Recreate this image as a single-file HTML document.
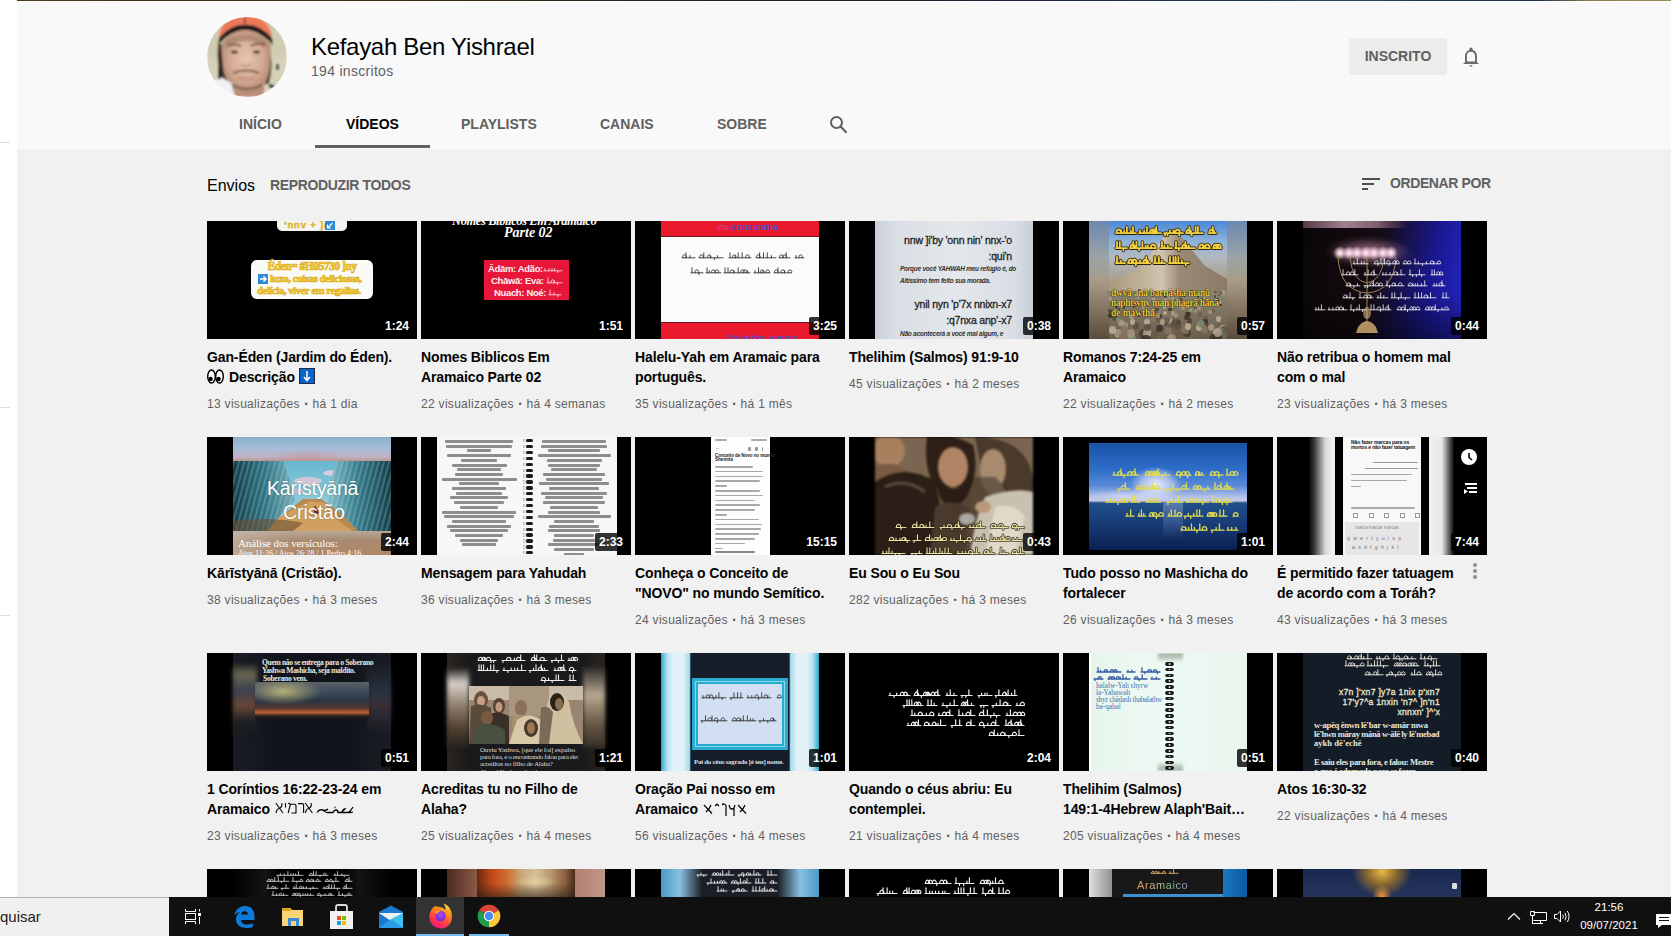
<!DOCTYPE html>
<html><head><meta charset="utf-8">
<style>
*{margin:0;padding:0;box-sizing:border-box}
html,body{width:1671px;height:936px;overflow:hidden;background:#fff;font-family:"Liberation Sans",sans-serif}
#app{position:absolute;left:17px;top:0;width:1654px;height:897px;background:#f1f1f1;overflow:hidden}
#hdr{position:absolute;left:0;top:0;width:1654px;height:149px;background:#f9f9f9}
#banner{position:absolute;left:0;top:0;width:1654px;height:1px;background:linear-gradient(90deg,#4a3a1a,#3a2a14 25%,#22201e 45%,#1a2438 60%,#2a4060 80%,#203048 92%,#8a7a50 95%,#9a8a60)}
.abs{position:absolute}
.th{position:absolute;width:210px;height:118px;background:#000;overflow:hidden}
.dur{position:absolute;right:4px;bottom:4px;height:18px;padding:0 4px;border-radius:2px;background:rgba(0,0,0,.8);color:#fff;font-size:12px;font-weight:bold;line-height:18px}
.ti{position:absolute;width:210px;font-size:14px;line-height:20px;font-weight:bold;color:#030303;white-space:nowrap;letter-spacing:-0.12px}
.me{position:absolute;font-size:12px;line-height:18px;color:#606060;white-space:nowrap;letter-spacing:0.3px}
.dot{font-size:9px;margin:0 1px;position:relative;top:-1px}
.tab{position:absolute;top:116px;font-size:14px;font-weight:bold;color:#606060;line-height:16px}
#taskbar{position:absolute;left:0;top:897px;width:1671px;height:39px;background:#101010}
</style></head><body>
<div class="abs" style="left:0;top:142px;width:10px;height:1px;background:#ddd"></div>
<div class="abs" style="left:0;top:407px;width:10px;height:1px;background:#ddd"></div>
<div class="abs" style="left:0;top:615px;width:10px;height:1px;background:#ddd"></div>
<div id="app">
<div id="hdr"><div id="banner"></div><div style="position:absolute;left:0;top:1px;width:1654px;height:1px;background:#fff"></div></div>
</div>
<svg class="abs" style="left:207px;top:17px" width="80" height="80" viewBox="0 0 80 80">
<defs><clipPath id="avc"><circle cx="40" cy="40" r="40"/></clipPath>
<filter id="bl" x="-10%" y="-10%" width="120%" height="120%"><feGaussianBlur stdDeviation="0.8"/></filter>
<radialGradient id="face" cx="50%" cy="45%" r="60%"><stop offset="0" stop-color="#e6c6ae"/><stop offset=".55" stop-color="#d4aa92"/><stop offset="1" stop-color="#a88068"/></radialGradient></defs>
<g clip-path="url(#avc)"><g filter="url(#bl)">
<rect width="80" height="80" fill="#d6d2b8"/>
<path d="M0 0 H80 V40 H0 Z" fill="#d0ccb0"/>
<path d="M12 21 Q13 -1 38 -1 Q63 -1 65 21 Q52 7 38 7.7 Q24 7 12 21 Z" fill="#ec7856"/>
<path d="M12 21 Q24 7 38 7.7 Q52 7 65 21 L66 28 Q52 13 38 13 Q24 13 11 28 Z" fill="#1c1818"/>
<path d="M37.7 0 V7" stroke="#2a3050" stroke-width="1.2"/>
<path d="M11 27 Q9 48 15 64 L21 66 L17 27 Z" fill="#3a2c22"/>
<path d="M60 24 Q68 46 62 66 L58 68 L61 28 Z" fill="#3a2c22"/>
<path d="M24 66 L56 66 L60 80 L20 80 Z" fill="#bc907a"/>
<path d="M14 28 Q24 13 38 13 Q52 13 64 28 L63 50 Q61 74 40 77 Q19 74 16 50 Z" fill="url(#face)"/><path d="M18 25 Q38 10 60 25 L58 30 Q38 18 20 30 Z" fill="#a07a62" opacity=".6"/>
<path d="M21 29 Q28 26 34 29" stroke="#5a4034" stroke-width="1.6" fill="none"/>
<path d="M44 29 Q51 25 58 28" stroke="#5a4034" stroke-width="1.6" fill="none"/>
<ellipse cx="27.5" cy="35" rx="3.6" ry="1.6" fill="#4a2e24"/><ellipse cx="49.5" cy="35" rx="3.6" ry="1.6" fill="#4a2e24"/>
<path d="M34 47 Q39 51 44 47" stroke="#a87a64" stroke-width="1.4" fill="none" opacity=".7"/>
<path d="M26 56 Q40 51 52 56" stroke="#7a5a48" stroke-width="2" fill="none"/>
<path d="M31 60.5 Q40 63 48 60.5" stroke="#c89080" stroke-width="2" fill="none"/>
<path d="M26 68 Q40 76 55 68" stroke="#6a5044" stroke-width="2.4" fill="none" opacity=".7"/>
<path d="M0 68 L14 60 L24 66 L28 80 L0 80 Z" fill="#eef0f4"/>
<path d="M58 70 L80 66 L80 80 L56 80 Z" fill="#ddd6c4"/>
<path d="M62 68 L74 74" stroke="#222" stroke-width="3.2"/>
<rect x="69" y="47" width="3" height="6" fill="#333"/>
<rect x="11" y="50" width="3" height="12" fill="#222"/>
</g></g></svg>
<div class="abs" style="left:311px;top:33px;font-size:24px;line-height:28px;color:#030303;letter-spacing:-0.3px">Kefayah Ben Yishrael</div>
<div class="abs" style="left:311px;top:62px;font-size:14px;line-height:18px;color:#606060;letter-spacing:0.3px">194 inscritos</div>
<div class="abs" style="left:1349px;top:38px;width:98px;height:37px;background:#ececec;border-radius:2px;color:#606060;font-size:14px;font-weight:bold;line-height:37px;text-align:center">INSCRITO</div>
<svg class="abs" style="left:1455px;top:40px" width="32" height="32" viewBox="0 0 32 32" fill="#6a6a6a">
<path d="M11 22.5 V15.8 a5 5 0 0 1 10 0 V22.5" stroke="#6a6a6a" stroke-width="1.9" fill="none"/>
<path d="M8 24 L11 21.5 H21 L24 24 Z"/><circle cx="16" cy="9.2" r="1.6"/><path d="M14 25.2 H18 L16 27 Z"/></svg>
<svg class="abs" style="left:820px;top:105px" width="40" height="40" viewBox="0 0 40 40">
<circle cx="16.5" cy="17.5" r="5.5" stroke="#606060" stroke-width="2" fill="none"/>
<path d="M20.5 21.5 L26 27" stroke="#606060" stroke-width="2.2" stroke-linecap="round"/></svg>
<div class="abs" style="left:1362px;top:178px;width:18px;height:2px;background:#505050"></div>
<div class="abs" style="left:1362px;top:183px;width:12px;height:2px;background:#505050"></div>
<div class="abs" style="left:1362px;top:188px;width:6px;height:2px;background:#505050"></div>
<div class="tab" style="left:239px">INÍCIO</div>
<div class="tab" style="left:346px;color:#030303">VÍDEOS</div>
<div class="abs" style="left:315px;top:145px;width:115px;height:3px;background:#606060"></div>
<div class="tab" style="left:461px">PLAYLISTS</div>
<div class="tab" style="left:600px">CANAIS</div>
<div class="tab" style="left:717px">SOBRE</div>
<div class="abs" style="left:207px;top:177px;font-size:16px;line-height:18px;color:#030303">Envios</div>
<div class="abs" style="left:270px;top:177px;font-size:14px;font-weight:bold;line-height:16px;color:#606060;letter-spacing:-0.35px">REPRODUZIR TODOS</div>
<div class="abs" style="left:1390px;top:175px;font-size:14px;font-weight:bold;line-height:16px;color:#606060;letter-spacing:-0.4px">ORDENAR POR</div>
<div class="th" style="left:207px;top:221px"><div style="position:absolute;left:70px;top:-2px;width:70px;height:12px;background:#f4f4f0;border-radius:0 0 5px 5px"></div><div style="position:absolute;left:77px;top:-1px;color:#f0c830;font-size:9.5px;line-height:1;white-space:nowrap;font-family:'Liberation Sans';font-weight:bold;letter-spacing:0.8px;-webkit-text-stroke:0.4px #d0a020">ʼnnv + ]a</div><div style="position:absolute;left:118px;top:0px;width:10px;height:9px;background:#2a8ad8;"></div><svg style="position:absolute;left:119px;top:1px" width="8" height="7"><path d="M6.5 1 L1.5 6 M1.5 2.5 V6 H5" stroke="#fff" stroke-width="1.2" fill="none"/></svg><div style="position:absolute;left:44px;top:39px;width:122px;height:39px;background:#fafaf6;border-radius:6px"></div><div style="position:absolute;left:44px;top:40px;color:#f5cc28;font-size:11.5px;line-height:1;white-space:nowrap;font-family:'Liberation Serif';font-weight:bold;letter-spacing:-0.5px;width:122px;text-align:center;-webkit-text-stroke:0.7px #e0b020">Éden= #H05730 ]ny</div><div style="position:absolute;left:51px;top:53px;width:10px;height:10px;background:#2a8ad8;"></div><svg style="position:absolute;left:51px;top:53px" width="10" height="10"><path d="M2 5 H8 M5.5 2.5 L8 5 L5.5 7.5" stroke="#fff" stroke-width="1.6" fill="none"/></svg><div style="position:absolute;left:63px;top:52px;color:#f5cc28;font-size:11px;line-height:1;white-space:nowrap;font-family:'Liberation Serif';font-weight:bold;letter-spacing:-0.5px;-webkit-text-stroke:0.7px #e0b020">luxo, coisas deliciosas,</div><div style="position:absolute;left:50px;top:64px;color:#f5cc28;font-size:11px;line-height:1;white-space:nowrap;font-family:'Liberation Serif';font-weight:bold;letter-spacing:-0.55px;-webkit-text-stroke:0.7px #e0b020">delícia, viver em regalias.</div><span class="dur">1:24</span></div>
<div class="ti" style="left:207px;top:347px">Gan-Éden (Jardim do Éden).<br><svg width="17" height="15" viewBox="0 0 17 15" style="vertical-align:-2px;margin-right:5px"><ellipse cx="4.5" cy="7.5" rx="3.8" ry="6.5" fill="#fff" stroke="#000" stroke-width="1.4"/><ellipse cx="12.5" cy="7.5" rx="3.8" ry="6.5" fill="#fff" stroke="#000" stroke-width="1.4"/><circle cx="3.6" cy="10" r="2.2" fill="#000"/><circle cx="11.6" cy="10" r="2.2" fill="#000"/></svg>Descrição<svg width="16" height="16" viewBox="0 0 16 16" style="vertical-align:-2px;margin-left:4px"><rect x="0.5" y="0.5" width="15" height="15" fill="#0a63c9" stroke="#1a2a4a" stroke-width="1"/><path d="M8 3 V12 M5 9 L8 12.5 L11 9" stroke="#fff" stroke-width="1.5" fill="none"/></svg></div>
<div class="me" style="left:207px;top:395px">13 visualizações <span class="dot">•</span> há 1 dia</div><div class="th" style="left:421px;top:221px"><div style="position:absolute;left:31px;top:-6px;color:#fff;font-size:12.5px;line-height:1;white-space:nowrap;font-family:'Liberation Serif';font-style:italic;font-weight:bold;letter-spacing:-0.4px">Nomes Biblicos Em Aramaico</div><div style="position:absolute;left:83px;top:5px;color:#fff;font-size:14px;line-height:1;white-space:nowrap;font-family:'Liberation Serif';font-style:italic;font-weight:bold">Parte 02</div><div style="position:absolute;left:63px;top:39px;width:85px;height:40px;background:#e8173a;"></div><div style="position:absolute;left:67px;top:43px;color:#fff0f4;font-size:9.5px;line-height:1;white-space:nowrap;font-family:'Liberation Sans';font-weight:bold;letter-spacing:-0.35px">Ādām: Adão:</div><svg style="position:absolute;left:123px;top:44px;overflow:visible" width="18" height="8"><path d="M0.0 5.8 H18.0 M1.0 5.8 V3.6 M4.9 5.8 V3.6 M8.0 5.8 V3.6 M10.6 5.8 V3.6 M13.7 5.8 V7.6" stroke="#fce8ee" stroke-width="0.8" fill="none" stroke-linecap="round"/></svg><div style="position:absolute;left:70px;top:55px;color:#fff0f4;font-size:9.5px;line-height:1;white-space:nowrap;font-family:'Liberation Sans';font-weight:bold;letter-spacing:-0.35px">Chāwā: Eva:</div><svg style="position:absolute;left:126px;top:56px;overflow:visible" width="15" height="8"><path d="M0.0 5.8 H15.0 M1.0 5.8 V0.8 M4.3 5.8 a1.8 1.8 0 1 1 2.8 0 M7.2 5.8 V3.6 M10.4 5.8 V7.6" stroke="#fce8ee" stroke-width="0.8" fill="none" stroke-linecap="round"/></svg><div style="position:absolute;left:73px;top:67px;color:#fff0f4;font-size:9.5px;line-height:1;white-space:nowrap;font-family:'Liberation Sans';font-weight:bold;letter-spacing:-0.35px">Nuach: Noé:</div><svg style="position:absolute;left:128px;top:68px;overflow:visible" width="12" height="8"><path d="M0.0 5.8 H12.0 M1.0 5.8 V0.8 M5.0 5.8 V3.6 M9.0 5.8 V7.6" stroke="#fce8ee" stroke-width="0.8" fill="none" stroke-linecap="round"/></svg><span class="dur">1:51</span></div>
<div class="ti" style="left:421px;top:347px">Nomes Biblicos Em<br>Aramaico Parte 02</div>
<div class="me" style="left:421px;top:395px">22 visualizações <span class="dot">•</span> há 4 semanas</div><div class="th" style="left:635px;top:221px"><div style="position:absolute;left:26px;top:0px;width:158px;height:118px;background:#ea1a2c;"></div><div style="position:absolute;left:26px;top:15px;width:158px;height:87px;background:#fbfbfb;border-top:1px solid #7a1222;border-bottom:1px solid #7a1222"></div><svg style="position:absolute;left:47px;top:31px;overflow:visible" width="122" height="8"><path d="M0.0 5.8 H13.0 M1.0 5.8 a1.8 1.8 0 1 1 2.8 0 M4.0 5.8 V0.8 M7.9 5.8 V3.6 M17.0 5.8 H41.0 M18.0 5.8 a1.8 1.8 0 1 1 2.8 0 M21.8 5.8 V0.8 M25.8 5.8 a1.8 1.8 0 1 1 2.8 0 M28.3 5.8 V3.6 M32.4 5.8 V7.6 M35.4 5.8 V3.6 M47.0 5.8 H69.0 M48.0 5.8 V0.8 M50.9 5.8 a1.8 1.8 0 1 1 2.8 0 M53.3 5.8 V3.6 M56.2 5.8 V0.8 M60.1 5.8 V0.8 M64.1 5.8 a1.8 1.8 0 1 1 2.8 0 M74.0 5.8 H94.0 M75.0 5.8 a1.8 1.8 0 1 1 2.8 0 M77.6 5.8 V0.8 M81.5 5.8 V0.8 M85.3 5.8 V0.8 M89.4 5.8 V3.6 M97.0 5.8 H108.0 M98.0 5.8 a1.8 1.8 0 1 1 2.8 0 M101.3 5.8 a1.8 1.8 0 1 1 2.8 0 M104.2 5.8 V0.8 M113.0 5.8 H122.0 M114.0 5.8 V3.6 M117.2 5.8 a1.8 1.8 0 1 1 2.8 0" stroke="#333" stroke-width="0.9" fill="none" stroke-linecap="round"/></svg><svg style="position:absolute;left:56px;top:46px;overflow:visible" width="105" height="8"><path d="M0.0 5.8 H12.0 M1.0 5.8 V0.8 M4.4 5.8 a1.8 1.8 0 1 1 2.8 0 M8.0 5.8 V7.6 M15.0 5.8 H30.0 M16.0 5.8 V0.8 M18.3 5.8 V3.6 M20.9 5.8 a1.8 1.8 0 1 1 2.8 0 M24.5 5.8 a1.8 1.8 0 1 1 2.8 0 M33.0 5.8 H59.0 M34.0 5.8 V0.8 M37.0 5.8 V0.8 M39.5 5.8 a1.8 1.8 0 1 1 2.8 0 M43.1 5.8 V3.6 M47.2 5.8 V0.8 M50.1 5.8 a1.8 1.8 0 1 1 2.8 0 M52.6 5.8 a1.8 1.8 0 1 1 2.8 0 M56.6 5.8 V3.6 M63.0 5.8 H79.0 M64.0 5.8 V3.6 M67.5 5.8 V0.8 M69.8 5.8 a1.8 1.8 0 1 1 2.8 0 M72.1 5.8 V3.6 M75.3 5.8 a1.8 1.8 0 1 1 2.8 0 M83.0 5.8 H100.0 M84.0 5.8 a1.8 1.8 0 1 1 2.8 0 M87.0 5.8 V0.8 M90.3 5.8 a1.8 1.8 0 1 1 2.8 0 M93.6 5.8 V3.6 M97.6 5.8 a1.8 1.8 0 1 1 2.8 0" stroke="#333" stroke-width="0.9" fill="none" stroke-linecap="round"/></svg><div style="position:absolute;left:83px;top:1px;color:#2a5ae8;font-size:9.5px;line-height:1;white-space:nowrap;font-family:'Liberation Sans';letter-spacing:-0.4px"><span style="color:#d04090">rta</span> e nos anima.</div><div style="position:absolute;left:92px;top:112px;color:#2a5ae8;font-size:9.5px;line-height:1;white-space:nowrap;font-family:'Liberation Sans'">Salvador, vamos</div><span class="dur">3:25</span></div>
<div class="ti" style="left:635px;top:347px">Halelu-Yah em Aramaic para<br>português.</div>
<div class="me" style="left:635px;top:395px">35 visualizações <span class="dot">•</span> há 1 mês</div><div class="th" style="left:849px;top:221px"><div style="position:absolute;left:26px;top:0px;width:158px;height:118px;background:linear-gradient(90deg,#c8ced6,#d8dee4 12%,#e4e8ec 50%,#d8dee4 88%,#c8ced6);"></div><div style="position:absolute;left:40px;top:14px;color:#222;font-size:10.5px;line-height:1;white-space:nowrap;font-family:'Liberation Sans';letter-spacing:-0.2px;-webkit-text-stroke:0.3px currentColor;width:123px;text-align:right">nnw ]i'by 'onn nin' nnx-'o</div><div style="position:absolute;left:40px;top:30px;color:#222;font-size:10.5px;line-height:1;white-space:nowrap;font-family:'Liberation Sans';letter-spacing:-0.2px;-webkit-text-stroke:0.3px currentColor;width:123px;text-align:right">:qui'n</div><div style="position:absolute;left:51px;top:45px;color:#333;font-size:6.5px;line-height:1;white-space:nowrap;font-family:'Liberation Sans';font-weight:bold;font-style:italic;letter-spacing:-0.25px">Porque você YAHWAH meu refúgio é, do</div><div style="position:absolute;left:51px;top:57px;color:#333;font-size:6.5px;line-height:1;white-space:nowrap;font-family:'Liberation Sans';font-weight:bold;font-style:italic;letter-spacing:-0.25px">Altíssimo tem feito sua morada.</div><div style="position:absolute;left:40px;top:78px;color:#222;font-size:10.5px;line-height:1;white-space:nowrap;font-family:'Liberation Sans';letter-spacing:-0.2px;-webkit-text-stroke:0.3px currentColor;width:123px;text-align:right">ynil nyn 'p'7x nnixn-x7</div><div style="position:absolute;left:40px;top:94px;color:#222;font-size:10.5px;line-height:1;white-space:nowrap;font-family:'Liberation Sans';letter-spacing:-0.2px;-webkit-text-stroke:0.3px currentColor;width:123px;text-align:right">:q7nxa anp'-x7</div><div style="position:absolute;left:51px;top:110px;color:#333;font-size:6.5px;line-height:1;white-space:nowrap;font-family:'Liberation Sans';font-weight:bold;font-style:italic;letter-spacing:-0.25px">Não acontecerá a você mal algum, e</div><span class="dur">0:38</span></div>
<div class="ti" style="left:849px;top:347px">Thelihim (Salmos) 91:9-10</div>
<div class="me" style="left:849px;top:375px">45 visualizações <span class="dot">•</span> há 2 meses</div><div class="th" style="left:1063px;top:221px"><div style="position:absolute;left:26px;top:0px;width:158px;height:118px;background:linear-gradient(180deg,#6a88b0 0%,#9aa4a8 30%,#a89c88 50%,#8a7c68 70%,#5a4c3c 100%);"></div><div style="position:absolute;left:46px;top:0px;width:118px;height:118px;background:linear-gradient(180deg,#4a88d8 0%,#90b4d8 18%,#b0b8c0 30%,#a8a090 50%,#8a7a64 66%,#7a6a58 80%,#5a4a3a 100%);"></div><svg style="position:absolute;left:46px;top:0" width="118" height="118"><defs><linearGradient id="mt4" x1="0" y1="0" x2="1" y2="0"><stop offset="0" stop-color="#a8987c"/><stop offset=".45" stop-color="#d0c4ae"/><stop offset=".6" stop-color="#9a8a74"/><stop offset="1" stop-color="#8a7a66"/></linearGradient></defs><path d="M0 62 L30 48 L58 12 L72 16 L96 45 L118 58 L118 80 L0 80 Z" fill="url(#mt4)"/><path d="M0 72 H118 V118 H0 Z" fill="#7a6a56"/></svg><div style="position:absolute;left:46px;top:70px;width:118px;height:48px;background:linear-gradient(180deg,#8a8470,#6a5e4c);"></div><div style="position:absolute;left:80.5px;top:105.6px;width:7.4px;height:8.2px;background:#b0a088;border-radius:50%;opacity:.85"></div><div style="position:absolute;left:152.9px;top:77.1px;width:2.7px;height:3.0px;background:#3a3028;border-radius:50%;opacity:.85"></div><div style="position:absolute;left:107.8px;top:90.4px;width:4.1px;height:4.5px;background:#b0a088;border-radius:50%;opacity:.85"></div><div style="position:absolute;left:116.4px;top:74.8px;width:2.6px;height:2.9px;background:#6a5a48;border-radius:50%;opacity:.85"></div><div style="position:absolute;left:75.0px;top:68.1px;width:2.5px;height:2.8px;background:#5a4c3e;border-radius:50%;opacity:.85"></div><div style="position:absolute;left:138.0px;top:76.1px;width:2.6px;height:2.9px;background:#6a5a48;border-radius:50%;opacity:.85"></div><div style="position:absolute;left:87.8px;top:114.9px;width:10.4px;height:11.4px;background:#8a7660;border-radius:50%;opacity:.85"></div><div style="position:absolute;left:52.3px;top:83.1px;width:3.2px;height:3.5px;background:#3a3028;border-radius:50%;opacity:.85"></div><div style="position:absolute;left:66.2px;top:93.1px;width:4.6px;height:5.0px;background:#b0a088;border-radius:50%;opacity:.85"></div><div style="position:absolute;left:141.8px;top:71.4px;width:2.5px;height:2.8px;background:#6a5a48;border-radius:50%;opacity:.85"></div><div style="position:absolute;left:112.2px;top:110.4px;width:8.9px;height:9.7px;background:#6a5a48;border-radius:50%;opacity:.85"></div><div style="position:absolute;left:141.1px;top:71.6px;width:2.5px;height:2.8px;background:#b0a088;border-radius:50%;opacity:.85"></div><div style="position:absolute;left:142.3px;top:102.9px;width:6.7px;height:7.4px;background:#4a3e32;border-radius:50%;opacity:.85"></div><div style="position:absolute;left:139.6px;top:95.1px;width:5.0px;height:5.5px;background:#6a5a48;border-radius:50%;opacity:.85"></div><div style="position:absolute;left:74.1px;top:113.7px;width:10.0px;height:11.0px;background:#6a5a48;border-radius:50%;opacity:.85"></div><div style="position:absolute;left:83.5px;top:113.8px;width:10.0px;height:11.0px;background:#6a5a48;border-radius:50%;opacity:.85"></div><div style="position:absolute;left:141.5px;top:70.7px;width:2.5px;height:2.8px;background:#c0b098;border-radius:50%;opacity:.85"></div><div style="position:absolute;left:153.6px;top:103.3px;width:6.8px;height:7.5px;background:#6a5a48;border-radius:50%;opacity:.85"></div><div style="position:absolute;left:109.6px;top:79.6px;width:2.9px;height:3.1px;background:#c0b098;border-radius:50%;opacity:.85"></div><div style="position:absolute;left:132.7px;top:102.7px;width:6.7px;height:7.3px;background:#c0b098;border-radius:50%;opacity:.85"></div><div style="position:absolute;left:158.2px;top:68.6px;width:2.5px;height:2.8px;background:#a89880;border-radius:50%;opacity:.85"></div><div style="position:absolute;left:46.7px;top:91.3px;width:4.3px;height:4.7px;background:#8a7660;border-radius:50%;opacity:.85"></div><div style="position:absolute;left:93.1px;top:103.7px;width:6.9px;height:7.6px;background:#3a3028;border-radius:50%;opacity:.85"></div><div style="position:absolute;left:148.8px;top:114.3px;width:10.2px;height:11.2px;background:#5a4c3e;border-radius:50%;opacity:.85"></div><div style="position:absolute;left:97.6px;top:70.6px;width:2.5px;height:2.8px;background:#4a3e32;border-radius:50%;opacity:.85"></div><div style="position:absolute;left:104.7px;top:74.9px;width:2.6px;height:2.9px;background:#a89880;border-radius:50%;opacity:.85"></div><div style="position:absolute;left:150.0px;top:107.6px;width:8.0px;height:8.8px;background:#c0b098;border-radius:50%;opacity:.85"></div><div style="position:absolute;left:49.3px;top:95.1px;width:5.0px;height:5.4px;background:#5a4c3e;border-radius:50%;opacity:.85"></div><div style="position:absolute;left:139.8px;top:74.9px;width:2.6px;height:2.9px;background:#a89880;border-radius:50%;opacity:.85"></div><div style="position:absolute;left:70.3px;top:100.9px;width:6.2px;height:6.9px;background:#5a4c3e;border-radius:50%;opacity:.85"></div><div style="position:absolute;left:88.1px;top:73.3px;width:2.5px;height:2.8px;background:#5a4c3e;border-radius:50%;opacity:.85"></div><div style="position:absolute;left:142.9px;top:72.8px;width:2.5px;height:2.8px;background:#b0a088;border-radius:50%;opacity:.85"></div><div style="position:absolute;left:133.1px;top:80.3px;width:2.9px;height:3.2px;background:#4a3e32;border-radius:50%;opacity:.85"></div><div style="position:absolute;left:59.6px;top:75.6px;width:2.6px;height:2.9px;background:#a89880;border-radius:50%;opacity:.85"></div><div style="position:absolute;left:69.5px;top:113.0px;width:9.7px;height:10.7px;background:#6a5a48;border-radius:50%;opacity:.85"></div><div style="position:absolute;left:156.1px;top:104.2px;width:7.1px;height:7.8px;background:#c0b098;border-radius:50%;opacity:.85"></div><div style="position:absolute;left:73.6px;top:91.0px;width:4.2px;height:4.6px;background:#4a3e32;border-radius:50%;opacity:.85"></div><div style="position:absolute;left:91.0px;top:90.2px;width:4.1px;height:4.5px;background:#6a5a48;border-radius:50%;opacity:.85"></div><div style="position:absolute;left:95.5px;top:81.0px;width:3.0px;height:3.3px;background:#b0a088;border-radius:50%;opacity:.85"></div><div style="position:absolute;left:99.4px;top:68.9px;width:2.5px;height:2.8px;background:#a89880;border-radius:50%;opacity:.85"></div><div style="position:absolute;left:58.7px;top:68.9px;width:2.5px;height:2.8px;background:#4a3e32;border-radius:50%;opacity:.85"></div><div style="position:absolute;left:54.9px;top:99.0px;width:5.8px;height:6.4px;background:#b0a088;border-radius:50%;opacity:.85"></div><div style="position:absolute;left:133.9px;top:99.9px;width:6.0px;height:6.6px;background:#7a8a78;border-radius:50%;opacity:.85"></div><div style="position:absolute;left:120.4px;top:73.1px;width:2.5px;height:2.8px;background:#3a3028;border-radius:50%;opacity:.85"></div><div style="position:absolute;left:99.6px;top:89.6px;width:4.0px;height:4.4px;background:#c0b098;border-radius:50%;opacity:.85"></div><div style="position:absolute;left:139.7px;top:77.1px;width:2.7px;height:3.0px;background:#c0b098;border-radius:50%;opacity:.85"></div><div style="position:absolute;left:75.5px;top:107.7px;width:8.1px;height:8.9px;background:#4a3e32;border-radius:50%;opacity:.85"></div><div style="position:absolute;left:80.2px;top:108.3px;width:8.2px;height:9.1px;background:#b0a088;border-radius:50%;opacity:.85"></div><div style="position:absolute;left:156.5px;top:104.5px;width:7.1px;height:7.9px;background:#5a4c3e;border-radius:50%;opacity:.85"></div><div style="position:absolute;left:132.6px;top:114.3px;width:10.2px;height:11.2px;background:#6a5a48;border-radius:50%;opacity:.85"></div><div style="position:absolute;left:105.1px;top:86.5px;width:3.6px;height:3.9px;background:#3a3028;border-radius:50%;opacity:.85"></div><div style="position:absolute;left:130.1px;top:85.8px;width:3.5px;height:3.8px;background:#6a5a48;border-radius:50%;opacity:.85"></div><div style="position:absolute;left:119.7px;top:107.6px;width:8.0px;height:8.8px;background:#4a3e32;border-radius:50%;opacity:.85"></div><div style="position:absolute;left:54.2px;top:80.9px;width:3.0px;height:3.3px;background:#7a8a78;border-radius:50%;opacity:.85"></div><div style="position:absolute;left:134.2px;top:84.9px;width:3.4px;height:3.7px;background:#a89880;border-radius:50%;opacity:.85"></div><div style="position:absolute;left:139.3px;top:78.0px;width:2.7px;height:3.0px;background:#6a5a48;border-radius:50%;opacity:.85"></div><div style="position:absolute;left:110.4px;top:96.4px;width:5.2px;height:5.8px;background:#6a5a48;border-radius:50%;opacity:.85"></div><div style="position:absolute;left:127.0px;top:69.0px;width:2.5px;height:2.8px;background:#4a3e32;border-radius:50%;opacity:.85"></div><div style="position:absolute;left:139.1px;top:98.1px;width:5.6px;height:6.1px;background:#3a3028;border-radius:50%;opacity:.85"></div><div style="position:absolute;left:119.0px;top:105.3px;width:7.4px;height:8.1px;background:#8a7660;border-radius:50%;opacity:.85"></div><div style="position:absolute;left:102.8px;top:70.8px;width:2.5px;height:2.8px;background:#c0b098;border-radius:50%;opacity:.85"></div><div style="position:absolute;left:124.9px;top:72.1px;width:2.5px;height:2.8px;background:#4a3e32;border-radius:50%;opacity:.85"></div><div style="position:absolute;left:118.4px;top:84.9px;width:3.4px;height:3.7px;background:#a89880;border-radius:50%;opacity:.85"></div><div style="position:absolute;left:130.3px;top:70.2px;width:2.5px;height:2.8px;background:#7a8a78;border-radius:50%;opacity:.85"></div><div style="position:absolute;left:135.0px;top:91.3px;width:4.3px;height:4.7px;background:#6a5a48;border-radius:50%;opacity:.85"></div><div style="position:absolute;left:51.0px;top:108.0px;width:8.1px;height:8.9px;background:#a89880;border-radius:50%;opacity:.85"></div><div style="position:absolute;left:86.4px;top:73.1px;width:2.5px;height:2.8px;background:#7a8a78;border-radius:50%;opacity:.85"></div><div style="position:absolute;left:134.6px;top:69.8px;width:2.5px;height:2.8px;background:#3a3028;border-radius:50%;opacity:.85"></div><div style="position:absolute;left:152.5px;top:106.4px;width:7.7px;height:8.5px;background:#7a8a78;border-radius:50%;opacity:.85"></div><div style="position:absolute;left:120.9px;top:93.5px;width:4.7px;height:5.1px;background:#4a3e32;border-radius:50%;opacity:.85"></div><div style="position:absolute;left:159.9px;top:70.1px;width:2.5px;height:2.8px;background:#c0b098;border-radius:50%;opacity:.85"></div><div style="position:absolute;left:50.4px;top:92.0px;width:4.4px;height:4.8px;background:#5a4c3e;border-radius:50%;opacity:.85"></div><div style="position:absolute;left:109.0px;top:77.6px;width:2.7px;height:3.0px;background:#8a7660;border-radius:50%;opacity:.85"></div><div style="position:absolute;left:69.1px;top:83.3px;width:3.2px;height:3.5px;background:#5a4c3e;border-radius:50%;opacity:.85"></div><div style="position:absolute;left:152.9px;top:95.1px;width:5.0px;height:5.5px;background:#c0b098;border-radius:50%;opacity:.85"></div><div style="position:absolute;left:144.8px;top:102.7px;width:6.7px;height:7.3px;background:#b0a088;border-radius:50%;opacity:.85"></div><div style="position:absolute;left:53.4px;top:86.9px;width:3.6px;height:4.0px;background:#3a3028;border-radius:50%;opacity:.85"></div><div style="position:absolute;left:81.0px;top:98.2px;width:5.6px;height:6.2px;background:#c0b098;border-radius:50%;opacity:.85"></div><div style="position:absolute;left:101.1px;top:77.0px;width:2.7px;height:3.0px;background:#b0a088;border-radius:50%;opacity:.85"></div><div style="position:absolute;left:136.0px;top:79.9px;width:2.9px;height:3.2px;background:#7a8a78;border-radius:50%;opacity:.85"></div><div style="position:absolute;left:59.2px;top:84.2px;width:3.3px;height:3.6px;background:#3a3028;border-radius:50%;opacity:.85"></div><div style="position:absolute;left:94.7px;top:92.8px;width:4.5px;height:5.0px;background:#3a3028;border-radius:50%;opacity:.85"></div><div style="position:absolute;left:124.1px;top:91.2px;width:4.2px;height:4.7px;background:#4a3e32;border-radius:50%;opacity:.85"></div><div style="position:absolute;left:122.4px;top:90.6px;width:4.2px;height:4.6px;background:#3a3028;border-radius:50%;opacity:.85"></div><div style="position:absolute;left:155.9px;top:81.6px;width:3.0px;height:3.3px;background:#3a3028;border-radius:50%;opacity:.85"></div><div style="position:absolute;left:93.0px;top:95.4px;width:5.0px;height:5.5px;background:#6a5a48;border-radius:50%;opacity:.85"></div><div style="position:absolute;left:123.6px;top:97.0px;width:5.3px;height:5.9px;background:#4a3e32;border-radius:50%;opacity:.85"></div><div style="position:absolute;left:137.0px;top:100.3px;width:6.1px;height:6.7px;background:#6a5a48;border-radius:50%;opacity:.85"></div><div style="position:absolute;left:99.8px;top:84.7px;width:3.3px;height:3.7px;background:#c0b098;border-radius:50%;opacity:.85"></div><div style="position:absolute;left:87.5px;top:110.0px;width:8.8px;height:9.6px;background:#6a5a48;border-radius:50%;opacity:.85"></div><div style="position:absolute;left:130.7px;top:88.2px;width:3.8px;height:4.2px;background:#a89880;border-radius:50%;opacity:.85"></div><div style="position:absolute;left:78.0px;top:113.5px;width:9.9px;height:10.9px;background:#3a3028;border-radius:50%;opacity:.85"></div><div style="position:absolute;left:144.7px;top:88.6px;width:3.9px;height:4.2px;background:#a89880;border-radius:50%;opacity:.85"></div><div style="position:absolute;left:87.8px;top:95.1px;width:5.0px;height:5.5px;background:#8a7660;border-radius:50%;opacity:.85"></div><div style="position:absolute;left:112.5px;top:98.9px;width:5.8px;height:6.3px;background:#4a3e32;border-radius:50%;opacity:.85"></div><div style="position:absolute;left:59.2px;top:84.5px;width:3.3px;height:3.6px;background:#5a4c3e;border-radius:50%;opacity:.85"></div><div style="position:absolute;left:59.0px;top:100.8px;width:6.2px;height:6.8px;background:#a89880;border-radius:50%;opacity:.85"></div><div style="position:absolute;left:76.7px;top:91.2px;width:4.2px;height:4.7px;background:#8a7660;border-radius:50%;opacity:.85"></div><div style="position:absolute;left:146.2px;top:112.5px;width:9.6px;height:10.5px;background:#3a3028;border-radius:50%;opacity:.85"></div><div style="position:absolute;left:58.2px;top:104.3px;width:7.1px;height:7.8px;background:#8a7660;border-radius:50%;opacity:.85"></div><div style="position:absolute;left:44.9px;top:88.0px;width:3.8px;height:4.1px;background:#4a3e32;border-radius:50%;opacity:.85"></div><div style="position:absolute;left:92.9px;top:92.0px;width:4.4px;height:4.8px;background:#b0a088;border-radius:50%;opacity:.85"></div><div style="position:absolute;left:111.2px;top:101.8px;width:6.5px;height:7.1px;background:#5a4c3e;border-radius:50%;opacity:.85"></div><div style="position:absolute;left:159.7px;top:73.0px;width:2.5px;height:2.8px;background:#a89880;border-radius:50%;opacity:.85"></div><div style="position:absolute;left:48.9px;top:72.3px;width:2.5px;height:2.8px;background:#8a7660;border-radius:50%;opacity:.85"></div><div style="position:absolute;left:74.8px;top:90.9px;width:4.2px;height:4.6px;background:#6a5a48;border-radius:50%;opacity:.85"></div><div style="position:absolute;left:64.9px;top:71.6px;width:2.5px;height:2.8px;background:#8a7660;border-radius:50%;opacity:.85"></div><div style="position:absolute;left:110.9px;top:92.4px;width:4.5px;height:4.9px;background:#a89880;border-radius:50%;opacity:.85"></div><div style="position:absolute;left:135.7px;top:99.2px;width:5.8px;height:6.4px;background:#7a8a78;border-radius:50%;opacity:.85"></div><div style="position:absolute;left:108.1px;top:76.4px;width:2.7px;height:2.9px;background:#b0a088;border-radius:50%;opacity:.85"></div><div style="position:absolute;left:153.9px;top:81.0px;width:3.0px;height:3.3px;background:#a89880;border-radius:50%;opacity:.85"></div><div style="position:absolute;left:105.1px;top:102.9px;width:6.7px;height:7.4px;background:#6a5a48;border-radius:50%;opacity:.85"></div><div style="position:absolute;left:117.3px;top:76.9px;width:2.7px;height:3.0px;background:#5a4c3e;border-radius:50%;opacity:.85"></div><div style="position:absolute;left:55.5px;top:112.4px;width:9.5px;height:10.5px;background:#5a4c3e;border-radius:50%;opacity:.85"></div><div style="position:absolute;left:87.3px;top:89.1px;width:3.9px;height:4.3px;background:#c0b098;border-radius:50%;opacity:.85"></div><div style="position:absolute;left:53.3px;top:95.8px;width:5.1px;height:5.6px;background:#7a8a78;border-radius:50%;opacity:.85"></div><div style="position:absolute;left:100.6px;top:73.8px;width:2.6px;height:2.8px;background:#3a3028;border-radius:50%;opacity:.85"></div><div style="position:absolute;left:101.9px;top:105.9px;width:7.5px;height:8.3px;background:#8a7660;border-radius:50%;opacity:.85"></div><div style="position:absolute;left:80.9px;top:103.0px;width:6.8px;height:7.4px;background:#5a4c3e;border-radius:50%;opacity:.85"></div><div style="position:absolute;left:79.1px;top:85.2px;width:3.4px;height:3.7px;background:#a89880;border-radius:50%;opacity:.85"></div><div style="position:absolute;left:156.2px;top:70.1px;width:2.5px;height:2.8px;background:#6a5a48;border-radius:50%;opacity:.85"></div><div style="position:absolute;left:156.0px;top:79.7px;width:2.9px;height:3.2px;background:#a89880;border-radius:50%;opacity:.85"></div><div style="position:absolute;left:52.7px;top:87.9px;width:3.7px;height:4.1px;background:#b0a088;border-radius:50%;opacity:.85"></div><div style="position:absolute;left:121.7px;top:102.3px;width:6.6px;height:7.2px;background:#c0b098;border-radius:50%;opacity:.85"></div><div style="position:absolute;left:99.4px;top:78.7px;width:2.8px;height:3.1px;background:#b0a088;border-radius:50%;opacity:.85"></div><div style="position:absolute;left:69.8px;top:82.3px;width:3.1px;height:3.4px;background:#4a3e32;border-radius:50%;opacity:.85"></div><div style="position:absolute;left:99.7px;top:98.4px;width:5.7px;height:6.2px;background:#5a4c3e;border-radius:50%;opacity:.85"></div><div style="position:absolute;left:89.2px;top:76.5px;width:2.7px;height:2.9px;background:#c0b098;border-radius:50%;opacity:.85"></div><div style="position:absolute;left:45.5px;top:75.1px;width:2.6px;height:2.9px;background:#a89880;border-radius:50%;opacity:.85"></div><div style="position:absolute;left:43.9px;top:70.3px;width:2.5px;height:2.8px;background:#8a7660;border-radius:50%;opacity:.85"></div><div style="position:absolute;left:99.9px;top:113.2px;width:9.8px;height:10.8px;background:#6a5a48;border-radius:50%;opacity:.85"></div><div style="position:absolute;left:52.7px;top:90.0px;width:4.1px;height:4.5px;background:#3a3028;border-radius:50%;opacity:.85"></div><div style="position:absolute;left:148.5px;top:87.9px;width:3.7px;height:4.1px;background:#6a5a48;border-radius:50%;opacity:.85"></div><div style="position:absolute;left:154.7px;top:72.5px;width:2.5px;height:2.8px;background:#5a4c3e;border-radius:50%;opacity:.85"></div><div style="position:absolute;left:151.2px;top:69.7px;width:2.5px;height:2.8px;background:#5a4c3e;border-radius:50%;opacity:.85"></div><div style="position:absolute;left:63.6px;top:113.2px;width:9.8px;height:10.8px;background:#7a8a78;border-radius:50%;opacity:.85"></div><div style="position:absolute;left:150.0px;top:112.0px;width:9.4px;height:10.3px;background:#3a3028;border-radius:50%;opacity:.85"></div><div style="position:absolute;left:55.5px;top:111.4px;width:9.2px;height:10.1px;background:#8a7660;border-radius:50%;opacity:.85"></div><div style="position:absolute;left:103.6px;top:113.2px;width:9.8px;height:10.8px;background:#a89880;border-radius:50%;opacity:.85"></div><div style="position:absolute;left:73.8px;top:75.4px;width:2.6px;height:2.9px;background:#b0a088;border-radius:50%;opacity:.85"></div><div style="position:absolute;left:127.5px;top:87.4px;width:3.7px;height:4.1px;background:#7a8a78;border-radius:50%;opacity:.85"></div><div style="position:absolute;left:107.6px;top:98.5px;width:5.7px;height:6.2px;background:#5a4c3e;border-radius:50%;opacity:.85"></div><div style="position:absolute;left:64.0px;top:108.4px;width:8.3px;height:9.1px;background:#a89880;border-radius:50%;opacity:.85"></div><div style="position:absolute;left:45.6px;top:105.3px;width:7.4px;height:8.1px;background:#c0b098;border-radius:50%;opacity:.85"></div><div style="position:absolute;left:66.9px;top:98.2px;width:5.6px;height:6.2px;background:#c0b098;border-radius:50%;opacity:.85"></div><div style="position:absolute;left:150.6px;top:74.1px;width:2.6px;height:2.8px;background:#4a3e32;border-radius:50%;opacity:.85"></div><div style="position:absolute;left:150.5px;top:107.2px;width:7.9px;height:8.7px;background:#b0a088;border-radius:50%;opacity:.85"></div><div style="position:absolute;left:96.9px;top:97.8px;width:5.5px;height:6.1px;background:#b0a088;border-radius:50%;opacity:.85"></div><div style="position:absolute;left:122.4px;top:93.5px;width:4.7px;height:5.1px;background:#4a3e32;border-radius:50%;opacity:.85"></div><div style="position:absolute;left:133.5px;top:74.0px;width:2.6px;height:2.8px;background:#4a3e32;border-radius:50%;opacity:.85"></div><div style="position:absolute;left:45.2px;top:92.1px;width:4.4px;height:4.8px;background:#3a3028;border-radius:50%;opacity:.85"></div><div style="position:absolute;left:95.0px;top:87.8px;width:3.7px;height:4.1px;background:#7a8a78;border-radius:50%;opacity:.85"></div><div style="position:absolute;left:139.6px;top:79.3px;width:2.8px;height:3.1px;background:#7a8a78;border-radius:50%;opacity:.85"></div><div style="position:absolute;left:137.7px;top:104.4px;width:7.1px;height:7.8px;background:#8a7660;border-radius:50%;opacity:.85"></div><div style="position:absolute;left:103.6px;top:96.4px;width:5.2px;height:5.7px;background:#c0b098;border-radius:50%;opacity:.85"></div><div style="position:absolute;left:125.9px;top:86.7px;width:3.6px;height:4.0px;background:#a89880;border-radius:50%;opacity:.85"></div><div style="position:absolute;left:46.4px;top:77.4px;width:2.7px;height:3.0px;background:#b0a088;border-radius:50%;opacity:.85"></div><div style="position:absolute;left:92.4px;top:86.5px;width:3.6px;height:3.9px;background:#4a3e32;border-radius:50%;opacity:.85"></div><div style="position:absolute;left:103.8px;top:93.8px;width:4.7px;height:5.2px;background:#8a7660;border-radius:50%;opacity:.85"></div><div style="position:absolute;left:101.5px;top:96.4px;width:5.2px;height:5.7px;background:#6a5a48;border-radius:50%;opacity:.85"></div><svg style="position:absolute;left:53px;top:5px;overflow:visible" width="100" height="10"><path d="M0.0 7.2 H20.0 M1.0 7.2 a2.2 2.2 0 1 1 3.5 0 M5.2 7.2 V4.5 M8.2 7.2 V4.5 M10.9 7.2 V1.0 M14.8 7.2 V4.5 M17.0 7.2 V1.0 M23.0 7.2 H45.0 M24.0 7.2 V4.5 M28.2 7.2 V4.5 M31.0 7.2 V1.0 M34.6 7.2 a2.2 2.2 0 1 1 3.5 0 M37.0 7.2 a2.2 2.2 0 1 1 3.5 0 M40.1 7.2 V1.0 M48.0 7.2 H67.0 M49.0 7.2 V9.5 M51.5 7.2 V9.5 M53.9 7.2 V4.5 M57.5 7.2 V4.5 M59.8 7.2 a2.2 2.2 0 1 1 3.5 0 M63.2 7.2 V9.5 M70.0 7.2 H87.0 M71.0 7.2 a2.2 2.2 0 1 1 3.5 0 M73.4 7.2 V1.0 M75.7 7.2 V9.5 M79.6 7.2 V1.0 M81.9 7.2 V1.0 M93.0 7.2 H100.0 M94.0 7.2 a2.2 2.2 0 1 1 3.5 0 M96.8 7.2 V1.0" stroke="#2a2008" stroke-width="3.4000000000000004" fill="none" stroke-linecap="round"/><path d="M0.0 7.2 H20.0 M1.0 7.2 a2.2 2.2 0 1 1 3.5 0 M5.2 7.2 V4.5 M8.2 7.2 V4.5 M10.9 7.2 V1.0 M14.8 7.2 V4.5 M17.0 7.2 V1.0 M23.0 7.2 H45.0 M24.0 7.2 V4.5 M28.2 7.2 V4.5 M31.0 7.2 V1.0 M34.6 7.2 a2.2 2.2 0 1 1 3.5 0 M37.0 7.2 a2.2 2.2 0 1 1 3.5 0 M40.1 7.2 V1.0 M48.0 7.2 H67.0 M49.0 7.2 V9.5 M51.5 7.2 V9.5 M53.9 7.2 V4.5 M57.5 7.2 V4.5 M59.8 7.2 a2.2 2.2 0 1 1 3.5 0 M63.2 7.2 V9.5 M70.0 7.2 H87.0 M71.0 7.2 a2.2 2.2 0 1 1 3.5 0 M73.4 7.2 V1.0 M75.7 7.2 V9.5 M79.6 7.2 V1.0 M81.9 7.2 V1.0 M93.0 7.2 H100.0 M94.0 7.2 a2.2 2.2 0 1 1 3.5 0 M96.8 7.2 V1.0" stroke="#f0d040" stroke-width="1.8" fill="none" stroke-linecap="round"/></svg><svg style="position:absolute;left:53px;top:20px;overflow:visible" width="105" height="10"><path d="M0.0 7.2 H11.0 M1.0 7.2 V1.0 M3.8 7.2 V1.0 M7.4 7.2 V9.5 M14.0 7.2 H40.0 M15.0 7.2 a2.2 2.2 0 1 1 3.5 0 M17.3 7.2 V1.0 M20.5 7.2 V1.0 M23.1 7.2 V9.5 M26.4 7.2 V1.0 M29.7 7.2 V4.5 M31.9 7.2 V4.5 M35.5 7.2 a2.2 2.2 0 1 1 3.5 0 M45.0 7.2 H56.0 M46.0 7.2 V1.0 M48.4 7.2 V4.5 M51.8 7.2 V4.5 M59.0 7.2 H79.0 M60.0 7.2 V1.0 M62.8 7.2 V9.5 M66.8 7.2 a2.2 2.2 0 1 1 3.5 0 M69.3 7.2 V1.0 M72.9 7.2 V4.5 M83.0 7.2 H94.0 M84.0 7.2 a2.2 2.2 0 1 1 3.5 0 M87.1 7.2 V4.5 M89.6 7.2 a2.2 2.2 0 1 1 3.5 0 M97.0 7.2 H105.0 M98.0 7.2 a2.2 2.2 0 1 1 3.5 0 M100.7 7.2 a2.2 2.2 0 1 1 3.5 0" stroke="#2a2008" stroke-width="3.4000000000000004" fill="none" stroke-linecap="round"/><path d="M0.0 7.2 H11.0 M1.0 7.2 V1.0 M3.8 7.2 V1.0 M7.4 7.2 V9.5 M14.0 7.2 H40.0 M15.0 7.2 a2.2 2.2 0 1 1 3.5 0 M17.3 7.2 V1.0 M20.5 7.2 V1.0 M23.1 7.2 V9.5 M26.4 7.2 V1.0 M29.7 7.2 V4.5 M31.9 7.2 V4.5 M35.5 7.2 a2.2 2.2 0 1 1 3.5 0 M45.0 7.2 H56.0 M46.0 7.2 V1.0 M48.4 7.2 V4.5 M51.8 7.2 V4.5 M59.0 7.2 H79.0 M60.0 7.2 V1.0 M62.8 7.2 V9.5 M66.8 7.2 a2.2 2.2 0 1 1 3.5 0 M69.3 7.2 V1.0 M72.9 7.2 V4.5 M83.0 7.2 H94.0 M84.0 7.2 a2.2 2.2 0 1 1 3.5 0 M87.1 7.2 V4.5 M89.6 7.2 a2.2 2.2 0 1 1 3.5 0 M97.0 7.2 H105.0 M98.0 7.2 a2.2 2.2 0 1 1 3.5 0 M100.7 7.2 a2.2 2.2 0 1 1 3.5 0" stroke="#f0d040" stroke-width="1.8" fill="none" stroke-linecap="round"/></svg><svg style="position:absolute;left:53px;top:35px;overflow:visible" width="75" height="10"><path d="M0.0 7.2 H9.0 M1.0 7.2 V1.0 M4.7 7.2 V4.5 M12.0 7.2 H34.0 M13.0 7.2 a2.2 2.2 0 1 1 3.5 0 M16.4 7.2 a2.2 2.2 0 1 1 3.5 0 M19.8 7.2 V9.5 M23.9 7.2 V4.5 M28.0 7.2 a2.2 2.2 0 1 1 3.5 0 M30.3 7.2 V1.0 M38.0 7.2 H49.0 M39.0 7.2 V1.0 M42.9 7.2 V1.0 M45.8 7.2 V4.5 M53.0 7.2 H73.0 M54.0 7.2 V1.0 M57.4 7.2 V1.0 M59.7 7.2 V1.0 M62.4 7.2 V1.0 M65.9 7.2 V4.5 M69.7 7.2 V9.5" stroke="#2a2008" stroke-width="3.4000000000000004" fill="none" stroke-linecap="round"/><path d="M0.0 7.2 H9.0 M1.0 7.2 V1.0 M4.7 7.2 V4.5 M12.0 7.2 H34.0 M13.0 7.2 a2.2 2.2 0 1 1 3.5 0 M16.4 7.2 a2.2 2.2 0 1 1 3.5 0 M19.8 7.2 V9.5 M23.9 7.2 V4.5 M28.0 7.2 a2.2 2.2 0 1 1 3.5 0 M30.3 7.2 V1.0 M38.0 7.2 H49.0 M39.0 7.2 V1.0 M42.9 7.2 V1.0 M45.8 7.2 V4.5 M53.0 7.2 H73.0 M54.0 7.2 V1.0 M57.4 7.2 V1.0 M59.7 7.2 V1.0 M62.4 7.2 V1.0 M65.9 7.2 V4.5 M69.7 7.2 V9.5" stroke="#f0d040" stroke-width="1.8" fill="none" stroke-linecap="round"/></svg><div style="position:absolute;left:48px;top:68px;color:#f0cc40;font-size:9.4px;line-height:1;white-space:nowrap;font-family:'Liberation Serif';font-weight:bold;text-shadow:0 0 1px #000,0 0 1px #000;letter-spacing:-0.2px">dwyā anā barnāsha manū</div><div style="position:absolute;left:48px;top:78px;color:#f0cc40;font-size:9.4px;line-height:1;white-space:nowrap;font-family:'Liberation Serif';font-weight:bold;text-shadow:0 0 1px #000,0 0 1px #000;letter-spacing:-0.3px">naphtsyny man phagrā hānā</div><div style="position:absolute;left:48px;top:88px;color:#f0cc40;font-size:9.4px;line-height:1;white-space:nowrap;font-family:'Liberation Serif';font-weight:bold;text-shadow:0 0 1px #000,0 0 1px #000">de mawthā.</div><span class="dur">0:57</span></div>
<div class="ti" style="left:1063px;top:347px">Romanos 7:24-25 em<br>Aramaico</div>
<div class="me" style="left:1063px;top:395px">22 visualizações <span class="dot">•</span> há 2 meses</div><div class="th" style="left:1277px;top:221px"><div style="position:absolute;left:26px;top:0px;width:158px;height:118px;background:linear-gradient(100deg,#0a0608 0%,#140c12 45%,#1a1890 78%,#2626c8 100%);"></div><div style="position:absolute;left:26px;top:0px;width:158px;height:118px;background:linear-gradient(180deg,rgba(0,0,0,0) 60%,rgba(0,0,0,.5));"></div><div style="position:absolute;left:26px;top:0px;width:105px;height:7px;background:linear-gradient(90deg,#5a3a48,#a08090 40%,#806070 70%,rgba(0,0,0,0));"></div><div style="position:absolute;left:48px;top:14px;width:85px;height:30px;background:radial-gradient(ellipse at center,rgba(200,130,160,.45) 0%,rgba(0,0,0,0) 70%);"></div><div style="position:absolute;left:56.0px;top:25px;width:14px;height:14px;background:radial-gradient(circle,#fff 0%,rgba(255,220,235,.85) 25%,rgba(0,0,0,0) 70%);"></div><div style="position:absolute;left:64.5px;top:25px;width:14px;height:14px;background:radial-gradient(circle,#fff 0%,rgba(255,220,235,.85) 25%,rgba(0,0,0,0) 70%);"></div><div style="position:absolute;left:73.0px;top:25px;width:14px;height:14px;background:radial-gradient(circle,#fff 0%,rgba(255,220,235,.85) 25%,rgba(0,0,0,0) 70%);"></div><div style="position:absolute;left:81.5px;top:25px;width:14px;height:14px;background:radial-gradient(circle,#fff 0%,rgba(255,220,235,.85) 25%,rgba(0,0,0,0) 70%);"></div><div style="position:absolute;left:90.0px;top:25px;width:14px;height:14px;background:radial-gradient(circle,#fff 0%,rgba(255,220,235,.85) 25%,rgba(0,0,0,0) 70%);"></div><div style="position:absolute;left:98.5px;top:25px;width:14px;height:14px;background:radial-gradient(circle,#fff 0%,rgba(255,220,235,.85) 25%,rgba(0,0,0,0) 70%);"></div><div style="position:absolute;left:107.0px;top:25px;width:14px;height:14px;background:radial-gradient(circle,#fff 0%,rgba(255,220,235,.85) 25%,rgba(0,0,0,0) 70%);"></div><div style="position:absolute;left:48px;top:18px;width:90px;height:30px;background:radial-gradient(ellipse,rgba(255,200,220,.35),rgba(0,0,0,0) 70%);"></div><svg style="position:absolute;left:55px;top:32px" width="70" height="80"><path d="M6 4 Q8 38 35 40 Q62 38 64 4 M18 4 Q20 28 35 30 Q50 28 52 4 M35 4 V70" stroke="#a08050" stroke-width="1" fill="none"/><path d="M26 74 Q35 62 44 74 L46 80 H24 Z" fill="#b09060"/><ellipse cx="35" cy="60" rx="4" ry="6" fill="#d0b080" opacity=".6"/></svg><svg style="position:absolute;left:76px;top:37px;overflow:visible" width="96" height="8"><path d="M0.0 5.8 H15.0 M1.0 5.8 V3.6 M4.3 5.8 V0.8 M8.5 5.8 V3.6 M11.2 5.8 V3.6 M21.0 5.8 H46.0 M22.0 5.8 a1.8 1.8 0 1 1 2.8 0 M24.9 5.8 V7.6 M27.9 5.8 V0.8 M31.5 5.8 V0.8 M33.9 5.8 a1.8 1.8 0 1 1 2.8 0 M36.1 5.8 V7.6 M40.2 5.8 a1.8 1.8 0 1 1 2.8 0 M43.0 5.8 a1.8 1.8 0 1 1 2.8 0 M50.0 5.8 H58.0 M51.0 5.8 a1.8 1.8 0 1 1 2.8 0 M54.9 5.8 a1.8 1.8 0 1 1 2.8 0 M61.0 5.8 H87.0 M62.0 5.8 V0.8 M65.3 5.8 V3.6 M69.4 5.8 V7.6 M73.4 5.8 V3.6 M77.6 5.8 a1.8 1.8 0 1 1 2.8 0 M80.8 5.8 V3.6 M84.5 5.8 a1.8 1.8 0 1 1 2.8 0" stroke="rgba(245,240,245,.92)" stroke-width="0.9" fill="none" stroke-linecap="round"/></svg><svg style="position:absolute;left:65px;top:48px;overflow:visible" width="107" height="8"><path d="M0.0 5.8 H16.0 M1.0 5.8 V0.8 M4.7 5.8 a1.8 1.8 0 1 1 2.8 0 M8.7 5.8 a1.8 1.8 0 1 1 2.8 0 M12.8 5.8 V0.8 M22.0 5.8 H35.0 M23.0 5.8 V3.6 M26.1 5.8 V0.8 M29.4 5.8 a1.8 1.8 0 1 1 2.8 0 M32.0 5.8 V0.8 M40.0 5.8 H63.0 M41.0 5.8 V3.6 M44.0 5.8 V3.6 M48.0 5.8 V3.6 M52.1 5.8 a1.8 1.8 0 1 1 2.8 0 M55.7 5.8 V3.6 M59.0 5.8 V0.8 M67.0 5.8 H83.0 M68.0 5.8 V0.8 M70.6 5.8 V7.6 M74.4 5.8 V7.6 M77.4 5.8 V0.8 M79.7 5.8 V7.6 M89.0 5.8 H101.0 M90.0 5.8 V0.8 M92.4 5.8 V0.8 M94.9 5.8 a1.8 1.8 0 1 1 2.8 0 M97.7 5.8 a1.8 1.8 0 1 1 2.8 0" stroke="rgba(245,240,245,.92)" stroke-width="0.9" fill="none" stroke-linecap="round"/></svg><svg style="position:absolute;left:69px;top:59px;overflow:visible" width="103" height="8"><path d="M0.0 5.8 H14.0 M1.0 5.8 a1.8 1.8 0 1 1 2.8 0 M4.6 5.8 V3.6 M7.9 5.8 V7.6 M11.5 5.8 V3.6 M18.0 5.8 H37.0 M19.0 5.8 V7.6 M21.7 5.8 V7.6 M24.3 5.8 a1.8 1.8 0 1 1 2.8 0 M27.3 5.8 V0.8 M29.8 5.8 a1.8 1.8 0 1 1 2.8 0 M33.3 5.8 a1.8 1.8 0 1 1 2.8 0 M40.0 5.8 H58.0 M41.0 5.8 V0.8 M43.4 5.8 V7.6 M46.4 5.8 a1.8 1.8 0 1 1 2.8 0 M49.1 5.8 V3.6 M52.8 5.8 a1.8 1.8 0 1 1 2.8 0 M62.0 5.8 H81.0 M63.0 5.8 a1.8 1.8 0 1 1 2.8 0 M66.9 5.8 V3.6 M69.2 5.8 V3.6 M71.6 5.8 V3.6 M75.4 5.8 V3.6 M78.7 5.8 V0.8 M87.0 5.8 H99.0 M88.0 5.8 V3.6 M90.6 5.8 V3.6 M93.4 5.8 a1.8 1.8 0 1 1 2.8 0 M96.0 5.8 V0.8" stroke="rgba(245,240,245,.92)" stroke-width="0.9" fill="none" stroke-linecap="round"/></svg><svg style="position:absolute;left:66px;top:71px;overflow:visible" width="106" height="8"><path d="M0.0 5.8 H12.0 M1.0 5.8 a1.8 1.8 0 1 1 2.8 0 M3.8 5.8 V3.6 M7.0 5.8 V0.8 M9.8 5.8 V7.6 M16.0 5.8 H30.0 M17.0 5.8 V0.8 M21.2 5.8 a1.8 1.8 0 1 1 2.8 0 M24.6 5.8 a1.8 1.8 0 1 1 2.8 0 M27.8 5.8 V3.6 M34.0 5.8 H45.0 M35.0 5.8 V3.6 M37.7 5.8 V0.8 M40.8 5.8 V3.6 M48.0 5.8 H67.0 M49.0 5.8 V0.8 M51.7 5.8 V0.8 M55.6 5.8 V7.6 M58.1 5.8 V0.8 M62.3 5.8 V7.6 M71.0 5.8 H93.0 M72.0 5.8 V0.8 M75.5 5.8 V0.8 M78.6 5.8 V0.8 M81.5 5.8 a1.8 1.8 0 1 1 2.8 0 M84.6 5.8 V3.6 M87.5 5.8 V0.8 M99.0 5.8 H106.0 M100.0 5.8 V0.8 M103.2 5.8 V0.8" stroke="rgba(245,240,245,.92)" stroke-width="0.9" fill="none" stroke-linecap="round"/></svg><svg style="position:absolute;left:38px;top:83px;overflow:visible" width="134" height="8"><path d="M0.0 5.8 H10.0 M1.0 5.8 V3.6 M3.6 5.8 V3.6 M6.4 5.8 V0.8 M13.0 5.8 H32.0 M14.0 5.8 V3.6 M18.0 5.8 V3.6 M21.2 5.8 a1.8 1.8 0 1 1 2.8 0 M24.4 5.8 a1.8 1.8 0 1 1 2.8 0 M28.5 5.8 V3.6 M35.0 5.8 H51.0 M36.0 5.8 V0.8 M38.7 5.8 V7.6 M42.0 5.8 V3.6 M44.3 5.8 V0.8 M47.5 5.8 V7.6 M55.0 5.8 H76.0 M56.0 5.8 V0.8 M58.9 5.8 V0.8 M62.7 5.8 a1.8 1.8 0 1 1 2.8 0 M65.6 5.8 V7.6 M68.2 5.8 V0.8 M70.8 5.8 a1.8 1.8 0 1 1 2.8 0 M73.3 5.8 V0.8 M82.0 5.8 H105.0 M83.0 5.8 a1.8 1.8 0 1 1 2.8 0 M86.7 5.8 a1.8 1.8 0 1 1 2.8 0 M90.2 5.8 V0.8 M92.5 5.8 V7.6 M95.2 5.8 a1.8 1.8 0 1 1 2.8 0 M97.7 5.8 a1.8 1.8 0 1 1 2.8 0 M101.5 5.8 a1.8 1.8 0 1 1 2.8 0 M110.0 5.8 H134.0 M111.0 5.8 a1.8 1.8 0 1 1 2.8 0 M113.8 5.8 a1.8 1.8 0 1 1 2.8 0 M116.8 5.8 a1.8 1.8 0 1 1 2.8 0 M120.3 5.8 V0.8 M123.0 5.8 V7.6 M127.1 5.8 V3.6 M130.0 5.8 a1.8 1.8 0 1 1 2.8 0" stroke="rgba(245,240,245,.92)" stroke-width="0.9" fill="none" stroke-linecap="round"/></svg><span class="dur">0:44</span></div>
<div class="ti" style="left:1277px;top:347px">Não retribua o homem mal<br>com o mal</div>
<div class="me" style="left:1277px;top:395px">23 visualizações <span class="dot">•</span> há 3 meses</div><div class="th" style="left:207px;top:437px"><div style="position:absolute;left:26px;top:0px;width:158px;height:24px;background:linear-gradient(180deg,#88b0c8 0%,#a8bcd8 50%,#c0b0c0 85%,#b89890);"></div><div style="position:absolute;left:60px;top:12px;width:80px;height:12px;background:radial-gradient(ellipse at 50% 100%,rgba(200,140,140,.6),rgba(0,0,0,0) 70%);"></div><svg style="position:absolute;left:26px;top:24px;filter:blur(0.4px)" width="158" height="70" viewBox="0 0 158 70"><defs><linearGradient id="sk6" x1="0" y1="0" x2="0" y2="1"><stop offset="0" stop-color="#68b8d0"/><stop offset="1" stop-color="#a8d8e0"/></linearGradient><linearGradient id="wl6" x1="0" y1="0" x2="1" y2="0"><stop offset="0" stop-color="#143e48"/><stop offset=".55" stop-color="#347888"/><stop offset="1" stop-color="#78b0b8"/></linearGradient><linearGradient id="wr6" x1="1" y1="0" x2="0" y2="0"><stop offset="0" stop-color="#143e48"/><stop offset=".55" stop-color="#3a8090"/><stop offset="1" stop-color="#88c0c8"/></linearGradient><pattern id="st6" width="5" height="9" patternUnits="userSpaceOnUse" patternTransform="rotate(15)"><rect width="5" height="9" fill="none"/><path d="M1 0 V9" stroke="#c8e8f0" stroke-width="0.8" opacity=".55"/></pattern></defs><rect width="158" height="70" fill="url(#sk6)"/><ellipse cx="75" cy="20" rx="14" ry="4" fill="#e8c8d8" opacity=".8"/><ellipse cx="100" cy="12" rx="10" ry="3" fill="#f0d0e0" opacity=".8"/><ellipse cx="62" cy="30" rx="9" ry="3" fill="#e0b8c8" opacity=".7"/><path d="M0 70 L30 70 Q55 50 70 38 L88 38 Q110 55 158 70 Z" fill="#b88850"/><path d="M20 70 Q60 48 78 40 L92 42 Q100 58 120 70 Z" fill="#d0a060"/><path d="M0 0 H50 Q58 20 62 40 Q45 55 35 70 H0 Z" fill="url(#wl6)"/><path d="M0 0 H50 Q58 20 62 40 Q45 55 35 70 H0 Z" fill="url(#st6)"/><path d="M158 0 H104 Q96 20 94 42 Q112 55 125 70 H158 Z" fill="url(#wr6)"/><path d="M158 0 H104 Q96 20 94 42 Q112 55 125 70 H158 Z" fill="url(#st6)"/><path d="M0 60 Q40 55 70 62 L60 70 H0 Z" fill="#6a5030" opacity=".6"/><path d="M82 44 L86 52 L80 54 Z" fill="#6a2a30"/></svg><div style="position:absolute;left:26px;top:94px;width:158px;height:24px;background:linear-gradient(180deg,#b8a898 0%,#a88a70 40%,#b08868 100%);"></div><div style="position:absolute;left:26px;top:94px;width:60px;height:24px;background:linear-gradient(90deg,rgba(200,190,180,.6),rgba(0,0,0,0));"></div><div style="position:absolute;left:60px;top:42px;color:#fff;font-size:19.5px;line-height:1;white-space:nowrap;font-family:'Liberation Sans';letter-spacing:-0.2px;text-shadow:0 0 2px rgba(0,0,0,.3)">Kārīstyānā</div><div style="position:absolute;left:76px;top:66px;color:#fff;font-size:19.5px;line-height:1;white-space:nowrap;font-family:'Liberation Sans';text-shadow:0 0 2px rgba(0,0,0,.3)">Cristão</div><div style="position:absolute;left:31px;top:101px;color:#fff;font-size:11px;line-height:1;white-space:nowrap;font-family:'Liberation Serif';letter-spacing:-0.1px">Análise dos versículos:</div><div style="position:absolute;left:31px;top:113px;color:#fff;font-size:8px;line-height:1;white-space:nowrap;font-family:'Liberation Serif'">Atos 11:26 / Atos 26:28 / 1 Pedro 4:16</div><span class="dur">2:44</span></div>
<div class="ti" style="left:207px;top:563px">Kārīstyānā (Cristão).</div>
<div class="me" style="left:207px;top:591px">38 visualizações <span class="dot">•</span> há 3 meses</div><div class="th" style="left:421px;top:437px"><div style="position:absolute;left:16px;top:0px;width:180px;height:118px;background:#f7f7f7;"></div><div style="position:absolute;left:24px;top:3.0px;width:68px;height:3px;background:rgba(25,25,25,.48);border-radius:1px"></div><div style="position:absolute;left:25px;top:7.7px;width:66px;height:3px;background:rgba(25,25,25,.48);border-radius:1px"></div><div style="position:absolute;left:46px;top:12.4px;width:24px;height:3px;background:rgba(25,25,25,.48);border-radius:1px"></div><div style="position:absolute;left:26px;top:17.1px;width:64px;height:3px;background:rgba(25,25,25,.48);border-radius:1px"></div><div style="position:absolute;left:40px;top:21.8px;width:36px;height:3px;background:rgba(25,25,25,.48);border-radius:1px"></div><div style="position:absolute;left:31px;top:26.5px;width:55px;height:3px;background:rgba(25,25,25,.48);border-radius:1px"></div><div style="position:absolute;left:36px;top:31.200000000000003px;width:44px;height:3px;background:rgba(25,25,25,.48);border-radius:1px"></div><div style="position:absolute;left:34px;top:35.9px;width:48px;height:3px;background:rgba(25,25,25,.48);border-radius:1px"></div><div style="position:absolute;left:21px;top:40.6px;width:75px;height:3px;background:rgba(25,25,25,.48);border-radius:1px"></div><div style="position:absolute;left:38px;top:45.300000000000004px;width:40px;height:3px;background:rgba(25,25,25,.48);border-radius:1px"></div><div style="position:absolute;left:31px;top:50.0px;width:54px;height:3px;background:rgba(25,25,25,.48);border-radius:1px"></div><div style="position:absolute;left:35px;top:54.7px;width:46px;height:3px;background:rgba(25,25,25,.48);border-radius:1px"></div><div style="position:absolute;left:29px;top:59.400000000000006px;width:58px;height:3px;background:rgba(25,25,25,.48);border-radius:1px"></div><div style="position:absolute;left:33px;top:64.1px;width:50px;height:3px;background:rgba(25,25,25,.48);border-radius:1px"></div><div style="position:absolute;left:39px;top:68.8px;width:38px;height:3px;background:rgba(25,25,25,.48);border-radius:1px"></div><div style="position:absolute;left:21px;top:73.5px;width:74px;height:3px;background:rgba(25,25,25,.48);border-radius:1px"></div><div style="position:absolute;left:23px;top:78.2px;width:70px;height:3px;background:rgba(25,25,25,.48);border-radius:1px"></div><div style="position:absolute;left:31px;top:82.9px;width:54px;height:3px;background:rgba(25,25,25,.48);border-radius:1px"></div><div style="position:absolute;left:26px;top:87.60000000000001px;width:64px;height:3px;background:rgba(25,25,25,.48);border-radius:1px"></div><div style="position:absolute;left:29px;top:92.3px;width:58px;height:3px;background:rgba(25,25,25,.48);border-radius:1px"></div><div style="position:absolute;left:34px;top:97.0px;width:48px;height:3px;background:rgba(25,25,25,.48);border-radius:1px"></div><div style="position:absolute;left:39px;top:101.7px;width:38px;height:3px;background:rgba(25,25,25,.48);border-radius:1px"></div><div style="position:absolute;left:41px;top:106.4px;width:34px;height:3px;background:rgba(25,25,25,.48);border-radius:1px"></div><div style="position:absolute;left:121px;top:3.0px;width:64px;height:3px;background:rgba(25,25,25,.48);border-radius:1px"></div><div style="position:absolute;left:120px;top:7.7px;width:66px;height:3px;background:rgba(25,25,25,.48);border-radius:1px"></div><div style="position:absolute;left:127px;top:12.4px;width:52px;height:3px;background:rgba(25,25,25,.48);border-radius:1px"></div><div style="position:absolute;left:117px;top:17.1px;width:73px;height:3px;background:rgba(25,25,25,.48);border-radius:1px"></div><div style="position:absolute;left:126px;top:21.8px;width:55px;height:3px;background:rgba(25,25,25,.48);border-radius:1px"></div><div style="position:absolute;left:127px;top:26.5px;width:52px;height:3px;background:rgba(25,25,25,.48);border-radius:1px"></div><div style="position:absolute;left:130px;top:31.200000000000003px;width:46px;height:3px;background:rgba(25,25,25,.48);border-radius:1px"></div><div style="position:absolute;left:122px;top:35.9px;width:62px;height:3px;background:rgba(25,25,25,.48);border-radius:1px"></div><div style="position:absolute;left:125px;top:40.6px;width:56px;height:3px;background:rgba(25,25,25,.48);border-radius:1px"></div><div style="position:absolute;left:118px;top:45.300000000000004px;width:70px;height:3px;background:rgba(25,25,25,.48);border-radius:1px"></div><div style="position:absolute;left:128px;top:50.0px;width:50px;height:3px;background:rgba(25,25,25,.48);border-radius:1px"></div><div style="position:absolute;left:120px;top:54.7px;width:66px;height:3px;background:rgba(25,25,25,.48);border-radius:1px"></div><div style="position:absolute;left:124px;top:59.400000000000006px;width:58px;height:3px;background:rgba(25,25,25,.48);border-radius:1px"></div><div style="position:absolute;left:122px;top:64.1px;width:62px;height:3px;background:rgba(25,25,25,.48);border-radius:1px"></div><div style="position:absolute;left:129px;top:68.8px;width:48px;height:3px;background:rgba(25,25,25,.48);border-radius:1px"></div><div style="position:absolute;left:127px;top:73.5px;width:52px;height:3px;background:rgba(25,25,25,.48);border-radius:1px"></div><div style="position:absolute;left:117px;top:78.2px;width:73px;height:3px;background:rgba(25,25,25,.48);border-radius:1px"></div><div style="position:absolute;left:133px;top:82.9px;width:40px;height:3px;background:rgba(25,25,25,.48);border-radius:1px"></div><div style="position:absolute;left:128px;top:87.60000000000001px;width:50px;height:3px;background:rgba(25,25,25,.48);border-radius:1px"></div><div style="position:absolute;left:127px;top:92.3px;width:52px;height:3px;background:rgba(25,25,25,.48);border-radius:1px"></div><div style="position:absolute;left:133px;top:97.0px;width:40px;height:3px;background:rgba(25,25,25,.48);border-radius:1px"></div><div style="position:absolute;left:132px;top:101.7px;width:42px;height:3px;background:rgba(25,25,25,.48);border-radius:1px"></div><div style="position:absolute;left:127px;top:106.4px;width:52px;height:3px;background:rgba(25,25,25,.48);border-radius:1px"></div><div style="position:absolute;left:133px;top:111.10000000000001px;width:40px;height:3px;background:rgba(25,25,25,.48);border-radius:1px"></div><div style="position:absolute;left:143px;top:115.80000000000001px;width:20px;height:3px;background:rgba(25,25,25,.48);border-radius:1px"></div><div style="position:absolute;left:102px;top:2.0px;width:10px;height:3.4px;background:#1a1a1a;border-radius:1.7px;box-shadow:inset 3px 0 0 #e0e0e0"></div><div style="position:absolute;left:102px;top:7.9px;width:10px;height:3.4px;background:#1a1a1a;border-radius:1.7px;box-shadow:inset 3px 0 0 #e0e0e0"></div><div style="position:absolute;left:102px;top:13.8px;width:10px;height:3.4px;background:#1a1a1a;border-radius:1.7px;box-shadow:inset 3px 0 0 #e0e0e0"></div><div style="position:absolute;left:102px;top:19.700000000000003px;width:10px;height:3.4px;background:#1a1a1a;border-radius:1.7px;box-shadow:inset 3px 0 0 #e0e0e0"></div><div style="position:absolute;left:102px;top:25.6px;width:10px;height:3.4px;background:#1a1a1a;border-radius:1.7px;box-shadow:inset 3px 0 0 #e0e0e0"></div><div style="position:absolute;left:102px;top:31.5px;width:10px;height:3.4px;background:#1a1a1a;border-radius:1.7px;box-shadow:inset 3px 0 0 #e0e0e0"></div><div style="position:absolute;left:102px;top:37.400000000000006px;width:10px;height:3.4px;background:#1a1a1a;border-radius:1.7px;box-shadow:inset 3px 0 0 #e0e0e0"></div><div style="position:absolute;left:102px;top:43.300000000000004px;width:10px;height:3.4px;background:#1a1a1a;border-radius:1.7px;box-shadow:inset 3px 0 0 #e0e0e0"></div><div style="position:absolute;left:102px;top:49.2px;width:10px;height:3.4px;background:#1a1a1a;border-radius:1.7px;box-shadow:inset 3px 0 0 #e0e0e0"></div><div style="position:absolute;left:102px;top:55.1px;width:10px;height:3.4px;background:#1a1a1a;border-radius:1.7px;box-shadow:inset 3px 0 0 #e0e0e0"></div><div style="position:absolute;left:102px;top:61.0px;width:10px;height:3.4px;background:#1a1a1a;border-radius:1.7px;box-shadow:inset 3px 0 0 #e0e0e0"></div><div style="position:absolute;left:102px;top:66.9px;width:10px;height:3.4px;background:#1a1a1a;border-radius:1.7px;box-shadow:inset 3px 0 0 #e0e0e0"></div><div style="position:absolute;left:102px;top:72.80000000000001px;width:10px;height:3.4px;background:#1a1a1a;border-radius:1.7px;box-shadow:inset 3px 0 0 #e0e0e0"></div><div style="position:absolute;left:102px;top:78.7px;width:10px;height:3.4px;background:#1a1a1a;border-radius:1.7px;box-shadow:inset 3px 0 0 #e0e0e0"></div><div style="position:absolute;left:102px;top:84.60000000000001px;width:10px;height:3.4px;background:#1a1a1a;border-radius:1.7px;box-shadow:inset 3px 0 0 #e0e0e0"></div><div style="position:absolute;left:102px;top:90.5px;width:10px;height:3.4px;background:#1a1a1a;border-radius:1.7px;box-shadow:inset 3px 0 0 #e0e0e0"></div><div style="position:absolute;left:102px;top:96.4px;width:10px;height:3.4px;background:#1a1a1a;border-radius:1.7px;box-shadow:inset 3px 0 0 #e0e0e0"></div><div style="position:absolute;left:102px;top:102.30000000000001px;width:10px;height:3.4px;background:#1a1a1a;border-radius:1.7px;box-shadow:inset 3px 0 0 #e0e0e0"></div><div style="position:absolute;left:102px;top:108.2px;width:10px;height:3.4px;background:#1a1a1a;border-radius:1.7px;box-shadow:inset 3px 0 0 #e0e0e0"></div><div style="position:absolute;left:102px;top:114.10000000000001px;width:10px;height:3.4px;background:#1a1a1a;border-radius:1.7px;box-shadow:inset 3px 0 0 #e0e0e0"></div><span class="dur">2:33</span></div>
<div class="ti" style="left:421px;top:563px">Mensagem para Yahudah</div>
<div class="me" style="left:421px;top:591px">36 visualizações <span class="dot">•</span> há 3 meses</div><div class="th" style="left:635px;top:437px"><div style="position:absolute;left:76px;top:0px;width:59px;height:118px;background:#fdfdfd;"></div><div style="position:absolute;left:80px;top:2px;width:12px;height:2px;background:#aaa;border-radius:1px"></div><div style="position:absolute;left:116px;top:2px;width:16px;height:2px;background:#aaa;border-radius:1px"></div><div style="position:absolute;left:80px;top:8px;color:#777;font-size:6px;line-height:1;white-space:nowrap;">←</div><div style="position:absolute;left:113px;top:10px;width:3px;height:4px;background:#999;border-radius:1px"></div><div style="position:absolute;left:120px;top:10px;width:3px;height:4px;background:#999;border-radius:1px"></div><div style="position:absolute;left:127px;top:10px;width:1px;height:4px;background:#999;border-radius:1px"></div><div style="position:absolute;left:80px;top:17px;color:#222;font-size:4.6px;line-height:1;white-space:nowrap;font-family:'Liberation Sans';font-weight:bold;letter-spacing:-0.1px">Conceito de Novo no mundo</div><div style="position:absolute;left:80px;top:21px;color:#222;font-size:4.6px;line-height:1;white-space:nowrap;font-family:'Liberation Sans';font-weight:bold">Shemita</div><div style="position:absolute;left:80px;top:29.0px;width:38px;height:1.6px;background:#a8a8a8;border-radius:1px"></div><div style="position:absolute;left:80px;top:33.8px;width:48px;height:1.6px;background:#a8a8a8;border-radius:1px"></div><div style="position:absolute;left:80px;top:38.6px;width:48px;height:1.6px;background:#a8a8a8;border-radius:1px"></div><div style="position:absolute;left:80px;top:43.4px;width:45px;height:1.6px;background:#a8a8a8;border-radius:1px"></div><div style="position:absolute;left:80px;top:48.2px;width:12px;height:1.6px;background:#a8a8a8;border-radius:1px"></div><div style="position:absolute;left:80px;top:53.0px;width:45px;height:1.6px;background:#a8a8a8;border-radius:1px"></div><div style="position:absolute;left:80px;top:57.8px;width:48px;height:1.6px;background:#a8a8a8;border-radius:1px"></div><div style="position:absolute;left:80px;top:62.6px;width:40px;height:1.6px;background:#a8a8a8;border-radius:1px"></div><div style="position:absolute;left:80px;top:67.4px;width:45px;height:1.6px;background:#a8a8a8;border-radius:1px"></div><div style="position:absolute;left:80px;top:72.19999999999999px;width:40px;height:1.6px;background:#a8a8a8;border-radius:1px"></div><div style="position:absolute;left:80px;top:77.0px;width:12px;height:1.6px;background:#a8a8a8;border-radius:1px"></div><div style="position:absolute;left:80px;top:81.8px;width:44px;height:1.6px;background:#a8a8a8;border-radius:1px"></div><div style="position:absolute;left:80px;top:86.6px;width:47px;height:1.6px;background:#a8a8a8;border-radius:1px"></div><div style="position:absolute;left:80px;top:91.4px;width:46px;height:1.6px;background:#a8a8a8;border-radius:1px"></div><div style="position:absolute;left:80px;top:96.2px;width:44px;height:1.6px;background:#a8a8a8;border-radius:1px"></div><div style="position:absolute;left:80px;top:101.0px;width:40px;height:1.6px;background:#a8a8a8;border-radius:1px"></div><div style="position:absolute;left:80px;top:105.8px;width:30px;height:1.6px;background:#a8a8a8;border-radius:1px"></div><div style="position:absolute;left:80px;top:110.6px;width:8px;height:1.6px;background:#a8a8a8;border-radius:1px"></div><div style="position:absolute;left:80px;top:114px;width:40px;height:1.5px;background:#888;border-radius:1px"></div><span class="dur">15:15</span></div>
<div class="ti" style="left:635px;top:563px">Conheça o Conceito de<br>"NOVO" no mundo Semítico.</div>
<div class="me" style="left:635px;top:611px">24 visualizações <span class="dot">•</span> há 3 meses</div><div class="th" style="left:849px;top:437px"><svg style="position:absolute;left:26px;top:0;filter:blur(0.8px)" width="158" height="118" viewBox="0 0 158 118"><rect width="158" height="118" fill="#5a4634"/><rect x="0" y="0" width="158" height="40" fill="#7a6650"/><ellipse cx="14" cy="14" rx="16" ry="16" fill="#a8805e"/><path d="M0 30 Q20 20 40 40 V70 H0 Z" fill="#7a5a40"/><path d="M52 0 Q78 -4 98 8 Q104 30 96 50 L60 50 Q48 30 52 0 Z" fill="#2e2016"/><ellipse cx="78" cy="30" rx="15" ry="20" fill="#b08464"/><path d="M62 38 Q78 66 96 38 Q98 56 86 66 Q78 70 70 66 Q60 56 62 38 Z" fill="#2a1c14"/><path d="M100 0 Q150 0 158 40 V75 Q140 70 120 60 Q105 45 105 25 Z" fill="#4a3a2c"/><ellipse cx="118" cy="32" rx="13" ry="20" fill="#a88a6e"/><path d="M104 40 Q112 66 132 58 Q126 44 120 40 Z" fill="#6a5848"/><path d="M110 60 Q140 50 158 55 V118 H95 Q100 80 110 60 Z" fill="#c8c0b0"/><path d="M120 70 Q140 65 150 80 L140 118 H110 Z" fill="#e0d8c8"/><path d="M0 45 Q30 25 60 45 Q70 80 60 118 H0 Z" fill="#2a1e16"/><path d="M10 50 Q30 40 50 55" stroke="#5a4a3a" stroke-width="3" fill="none"/><path d="M60 70 Q75 60 95 72 L90 118 H55 Z" fill="#4a3a2e"/><ellipse cx="92" cy="82" rx="8" ry="6" fill="#a8a8a0"/><ellipse cx="108" cy="70" rx="8" ry="6" fill="#b89878"/></svg><svg style="position:absolute;left:47px;top:84px;overflow:visible" width="128" height="9"><path d="M0.0 6.5 H10.0 M1.0 6.5 a2.0 2.0 0 1 1 3.2 0 M5.1 6.5 V8.5 M16.0 6.5 H38.0 M17.0 6.5 a2.0 2.0 0 1 1 3.2 0 M20.9 6.5 V0.9 M24.3 6.5 a2.0 2.0 0 1 1 3.2 0 M27.4 6.5 V4.0 M30.1 6.5 V4.0 M33.8 6.5 V0.9 M44.0 6.5 H69.0 M45.0 6.5 V8.5 M48.0 6.5 V4.0 M51.8 6.5 a2.0 2.0 0 1 1 3.2 0 M56.0 6.5 V8.5 M59.7 6.5 a2.0 2.0 0 1 1 3.2 0 M62.3 6.5 V0.9 M65.8 6.5 V8.5 M73.0 6.5 H89.0 M74.0 6.5 V4.0 M77.2 6.5 V4.0 M81.2 6.5 a2.0 2.0 0 1 1 3.2 0 M84.5 6.5 V0.9 M95.0 6.5 H112.0 M96.0 6.5 a2.0 2.0 0 1 1 3.2 0 M99.8 6.5 V4.0 M103.2 6.5 a2.0 2.0 0 1 1 3.2 0 M107.2 6.5 V8.5 M116.0 6.5 H128.0 M117.0 6.5 a2.0 2.0 0 1 1 3.2 0 M119.9 6.5 V8.5 M122.5 6.5 V8.5" stroke="rgba(40,30,20,.8)" stroke-width="2.7" fill="none" stroke-linecap="round"/><path d="M0.0 6.5 H10.0 M1.0 6.5 a2.0 2.0 0 1 1 3.2 0 M5.1 6.5 V8.5 M16.0 6.5 H38.0 M17.0 6.5 a2.0 2.0 0 1 1 3.2 0 M20.9 6.5 V0.9 M24.3 6.5 a2.0 2.0 0 1 1 3.2 0 M27.4 6.5 V4.0 M30.1 6.5 V4.0 M33.8 6.5 V0.9 M44.0 6.5 H69.0 M45.0 6.5 V8.5 M48.0 6.5 V4.0 M51.8 6.5 a2.0 2.0 0 1 1 3.2 0 M56.0 6.5 V8.5 M59.7 6.5 a2.0 2.0 0 1 1 3.2 0 M62.3 6.5 V0.9 M65.8 6.5 V8.5 M73.0 6.5 H89.0 M74.0 6.5 V4.0 M77.2 6.5 V4.0 M81.2 6.5 a2.0 2.0 0 1 1 3.2 0 M84.5 6.5 V0.9 M95.0 6.5 H112.0 M96.0 6.5 a2.0 2.0 0 1 1 3.2 0 M99.8 6.5 V4.0 M103.2 6.5 a2.0 2.0 0 1 1 3.2 0 M107.2 6.5 V8.5 M116.0 6.5 H128.0 M117.0 6.5 a2.0 2.0 0 1 1 3.2 0 M119.9 6.5 V8.5 M122.5 6.5 V8.5" stroke="#e8e0a0" stroke-width="1.1" fill="none" stroke-linecap="round"/></svg><svg style="position:absolute;left:40px;top:97px;overflow:visible" width="135" height="9"><path d="M0.0 6.5 H21.0 M1.0 6.5 a2.0 2.0 0 1 1 3.2 0 M4.3 6.5 V4.0 M7.0 6.5 V4.0 M11.0 6.5 V4.0 M13.4 6.5 a2.0 2.0 0 1 1 3.2 0 M15.9 6.5 V4.0 M18.2 6.5 V8.5 M24.0 6.5 H32.0 M25.0 6.5 V8.5 M28.5 6.5 V0.9 M36.0 6.5 H57.0 M37.0 6.5 a2.0 2.0 0 1 1 3.2 0 M40.6 6.5 V0.9 M43.0 6.5 V4.0 M45.5 6.5 a2.0 2.0 0 1 1 3.2 0 M48.6 6.5 a2.0 2.0 0 1 1 3.2 0 M51.3 6.5 V0.9 M53.9 6.5 a2.0 2.0 0 1 1 3.2 0 M61.0 6.5 H84.0 M62.0 6.5 V4.0 M65.0 6.5 V4.0 M67.7 6.5 V8.5 M71.5 6.5 V0.9 M75.3 6.5 V8.5 M78.6 6.5 a2.0 2.0 0 1 1 3.2 0 M81.1 6.5 V8.5 M87.0 6.5 H97.0 M88.0 6.5 V4.0 M91.6 6.5 V4.0 M94.8 6.5 V0.9 M101.0 6.5 H120.0 M102.0 6.5 V0.9 M105.3 6.5 V4.0 M109.2 6.5 V4.0 M111.8 6.5 a2.0 2.0 0 1 1 3.2 0 M114.0 6.5 V0.9 M117.3 6.5 a2.0 2.0 0 1 1 3.2 0 M123.0 6.5 H133.0 M124.0 6.5 V4.0 M128.1 6.5 V4.0" stroke="rgba(40,30,20,.8)" stroke-width="2.7" fill="none" stroke-linecap="round"/><path d="M0.0 6.5 H21.0 M1.0 6.5 a2.0 2.0 0 1 1 3.2 0 M4.3 6.5 V4.0 M7.0 6.5 V4.0 M11.0 6.5 V4.0 M13.4 6.5 a2.0 2.0 0 1 1 3.2 0 M15.9 6.5 V4.0 M18.2 6.5 V8.5 M24.0 6.5 H32.0 M25.0 6.5 V8.5 M28.5 6.5 V0.9 M36.0 6.5 H57.0 M37.0 6.5 a2.0 2.0 0 1 1 3.2 0 M40.6 6.5 V0.9 M43.0 6.5 V4.0 M45.5 6.5 a2.0 2.0 0 1 1 3.2 0 M48.6 6.5 a2.0 2.0 0 1 1 3.2 0 M51.3 6.5 V0.9 M53.9 6.5 a2.0 2.0 0 1 1 3.2 0 M61.0 6.5 H84.0 M62.0 6.5 V4.0 M65.0 6.5 V4.0 M67.7 6.5 V8.5 M71.5 6.5 V0.9 M75.3 6.5 V8.5 M78.6 6.5 a2.0 2.0 0 1 1 3.2 0 M81.1 6.5 V8.5 M87.0 6.5 H97.0 M88.0 6.5 V4.0 M91.6 6.5 V4.0 M94.8 6.5 V0.9 M101.0 6.5 H120.0 M102.0 6.5 V0.9 M105.3 6.5 V4.0 M109.2 6.5 V4.0 M111.8 6.5 a2.0 2.0 0 1 1 3.2 0 M114.0 6.5 V0.9 M117.3 6.5 a2.0 2.0 0 1 1 3.2 0 M123.0 6.5 H133.0 M124.0 6.5 V4.0 M128.1 6.5 V4.0" stroke="#e8e0a0" stroke-width="1.1" fill="none" stroke-linecap="round"/></svg><svg style="position:absolute;left:33px;top:110px;overflow:visible" width="142" height="9"><path d="M0.0 6.5 H23.0 M1.0 6.5 V4.0 M4.6 6.5 V4.0 M7.0 6.5 V0.9 M10.0 6.5 V4.0 M13.4 6.5 V8.5 M17.4 6.5 V8.5 M29.0 6.5 H40.0 M30.0 6.5 V8.5 M33.7 6.5 V8.5 M37.4 6.5 V4.0 M44.0 6.5 H70.0 M45.0 6.5 V0.9 M47.8 6.5 V0.9 M51.5 6.5 V4.0 M53.8 6.5 V0.9 M57.9 6.5 V0.9 M60.2 6.5 V4.0 M63.0 6.5 V0.9 M66.3 6.5 V0.9 M75.0 6.5 H97.0 M76.0 6.5 V4.0 M80.1 6.5 V4.0 M83.3 6.5 V4.0 M86.9 6.5 a2.0 2.0 0 1 1 3.2 0 M90.4 6.5 V8.5 M94.4 6.5 V0.9 M102.0 6.5 H112.0 M103.0 6.5 a2.0 2.0 0 1 1 3.2 0 M105.8 6.5 V4.0 M108.9 6.5 V0.9 M118.0 6.5 H126.0 M119.0 6.5 V0.9 M122.0 6.5 V4.0 M130.0 6.5 H142.0 M131.0 6.5 a2.0 2.0 0 1 1 3.2 0 M135.2 6.5 V8.5 M138.5 6.5 V0.9" stroke="rgba(40,30,20,.8)" stroke-width="2.7" fill="none" stroke-linecap="round"/><path d="M0.0 6.5 H23.0 M1.0 6.5 V4.0 M4.6 6.5 V4.0 M7.0 6.5 V0.9 M10.0 6.5 V4.0 M13.4 6.5 V8.5 M17.4 6.5 V8.5 M29.0 6.5 H40.0 M30.0 6.5 V8.5 M33.7 6.5 V8.5 M37.4 6.5 V4.0 M44.0 6.5 H70.0 M45.0 6.5 V0.9 M47.8 6.5 V0.9 M51.5 6.5 V4.0 M53.8 6.5 V0.9 M57.9 6.5 V0.9 M60.2 6.5 V4.0 M63.0 6.5 V0.9 M66.3 6.5 V0.9 M75.0 6.5 H97.0 M76.0 6.5 V4.0 M80.1 6.5 V4.0 M83.3 6.5 V4.0 M86.9 6.5 a2.0 2.0 0 1 1 3.2 0 M90.4 6.5 V8.5 M94.4 6.5 V0.9 M102.0 6.5 H112.0 M103.0 6.5 a2.0 2.0 0 1 1 3.2 0 M105.8 6.5 V4.0 M108.9 6.5 V0.9 M118.0 6.5 H126.0 M119.0 6.5 V0.9 M122.0 6.5 V4.0 M130.0 6.5 H142.0 M131.0 6.5 a2.0 2.0 0 1 1 3.2 0 M135.2 6.5 V8.5 M138.5 6.5 V0.9" stroke="#e8e0a0" stroke-width="1.1" fill="none" stroke-linecap="round"/></svg><span class="dur">0:43</span></div>
<div class="ti" style="left:849px;top:563px">Eu Sou o Eu Sou</div>
<div class="me" style="left:849px;top:591px">282 visualizações <span class="dot">•</span> há 3 meses</div><div class="th" style="left:1063px;top:437px"><div style="position:absolute;left:26px;top:6px;width:158px;height:107px;background:linear-gradient(180deg,#1a52a8 0%,#2e6ec8 25%,#5a8ad8 40%,#b0c0e8 50%,#c8c8e8 54%,#20508a 56%,#183c78 75%,#0a2050 100%);"></div><div style="position:absolute;left:68px;top:30px;width:50px;height:36px;background:radial-gradient(ellipse,rgba(240,240,255,.95) 0%,rgba(210,215,245,.7) 40%,rgba(0,0,0,0) 72%);"></div><div style="position:absolute;left:26px;top:52px;width:80px;height:14px;background:radial-gradient(ellipse,rgba(220,220,250,.7),rgba(0,0,0,0) 70%);"></div><div style="position:absolute;left:100px;top:62px;width:20px;height:40px;background:linear-gradient(180deg,rgba(180,200,240,.4),rgba(0,0,0,0));"></div><svg style="position:absolute;left:50px;top:31px;overflow:visible" width="125" height="10"><path d="M0.0 7.2 H26.0 M1.0 7.2 V4.5 M5.0 7.2 a2.2 2.2 0 1 1 3.5 0 M7.9 7.2 V1.0 M11.1 7.2 V9.5 M15.2 7.2 a2.2 2.2 0 1 1 3.5 0 M18.9 7.2 a2.2 2.2 0 1 1 3.5 0 M22.0 7.2 V1.0 M32.0 7.2 H57.0 M33.0 7.2 a2.2 2.2 0 1 1 3.5 0 M36.1 7.2 a2.2 2.2 0 1 1 3.5 0 M39.6 7.2 a2.2 2.2 0 1 1 3.5 0 M42.2 7.2 a2.2 2.2 0 1 1 3.5 0 M45.0 7.2 V1.0 M48.9 7.2 V9.5 M52.4 7.2 V4.5 M63.0 7.2 H78.0 M64.0 7.2 a2.2 2.2 0 1 1 3.5 0 M67.0 7.2 V9.5 M69.2 7.2 a2.2 2.2 0 1 1 3.5 0 M72.5 7.2 a2.2 2.2 0 1 1 3.5 0 M74.7 7.2 V9.5 M82.0 7.2 H91.0 M83.0 7.2 a2.2 2.2 0 1 1 3.5 0 M85.8 7.2 V4.5 M88.8 7.2 V4.5 M97.0 7.2 H110.0 M98.0 7.2 a2.2 2.2 0 1 1 3.5 0 M102.0 7.2 a2.2 2.2 0 1 1 3.5 0 M105.9 7.2 V9.5 M113.0 7.2 H123.0 M114.0 7.2 V1.0 M117.4 7.2 a2.2 2.2 0 1 1 3.5 0 M121.0 7.2 a2.2 2.2 0 1 1 3.5 0" stroke="#e0dc50" stroke-width="1.3" fill="none" stroke-linecap="round"/></svg><svg style="position:absolute;left:55px;top:45px;overflow:visible" width="120" height="10"><path d="M0.0 7.2 H12.0 M1.0 7.2 V9.5 M3.9 7.2 a2.2 2.2 0 1 1 3.5 0 M7.4 7.2 V1.0 M18.0 7.2 H44.0 M19.0 7.2 a2.2 2.2 0 1 1 3.5 0 M22.6 7.2 a2.2 2.2 0 1 1 3.5 0 M26.3 7.2 V4.5 M28.9 7.2 V4.5 M32.0 7.2 a2.2 2.2 0 1 1 3.5 0 M34.4 7.2 V1.0 M36.9 7.2 a2.2 2.2 0 1 1 3.5 0 M40.9 7.2 V4.5 M48.0 7.2 H71.0 M49.0 7.2 V9.5 M52.5 7.2 V9.5 M55.2 7.2 V1.0 M58.0 7.2 V9.5 M61.2 7.2 V9.5 M64.3 7.2 a2.2 2.2 0 1 1 3.5 0 M68.3 7.2 V1.0 M75.0 7.2 H92.0 M76.0 7.2 a2.2 2.2 0 1 1 3.5 0 M79.3 7.2 a2.2 2.2 0 1 1 3.5 0 M82.9 7.2 V4.5 M86.7 7.2 V9.5 M89.8 7.2 V4.5 M96.0 7.2 H116.0 M97.0 7.2 V1.0 M99.6 7.2 a2.2 2.2 0 1 1 3.5 0 M102.9 7.2 V1.0 M106.8 7.2 a2.2 2.2 0 1 1 3.5 0 M109.1 7.2 V1.0 M112.2 7.2 V4.5" stroke="#e0dc50" stroke-width="1.3" fill="none" stroke-linecap="round"/></svg><svg style="position:absolute;left:43px;top:58px;overflow:visible" width="132" height="10"><path d="M0.0 7.2 H22.0 M1.0 7.2 V4.5 M4.6 7.2 V4.5 M8.2 7.2 V4.5 M11.8 7.2 V9.5 M15.0 7.2 a2.2 2.2 0 1 1 3.5 0 M18.5 7.2 a2.2 2.2 0 1 1 3.5 0 M25.0 7.2 H34.0 M26.0 7.2 V1.0 M28.4 7.2 V1.0 M31.7 7.2 V1.0 M40.0 7.2 H55.0 M41.0 7.2 V4.5 M44.3 7.2 V4.5 M47.0 7.2 a2.2 2.2 0 1 1 3.5 0 M50.4 7.2 V4.5 M61.0 7.2 H77.0 M62.0 7.2 V9.5 M66.0 7.2 V4.5 M69.3 7.2 V4.5 M72.4 7.2 V1.0 M80.0 7.2 H103.0 M81.0 7.2 V4.5 M83.5 7.2 a2.2 2.2 0 1 1 3.5 0 M87.5 7.2 a2.2 2.2 0 1 1 3.5 0 M90.4 7.2 V4.5 M93.9 7.2 V4.5 M96.7 7.2 V9.5 M99.2 7.2 V4.5 M106.0 7.2 H126.0 M107.0 7.2 V1.0 M110.3 7.2 a2.2 2.2 0 1 1 3.5 0 M113.3 7.2 V4.5 M116.4 7.2 V9.5 M118.7 7.2 a2.2 2.2 0 1 1 3.5 0 M121.0 7.2 V9.5" stroke="#e0dc50" stroke-width="1.3" fill="none" stroke-linecap="round"/></svg><svg style="position:absolute;left:63px;top:72px;overflow:visible" width="112" height="10"><path d="M0.0 7.2 H8.0 M1.0 7.2 V4.5 M4.7 7.2 V1.0 M12.0 7.2 H20.0 M13.0 7.2 V4.5 M15.4 7.2 V1.0 M17.8 7.2 V4.5 M23.0 7.2 H37.0 M24.0 7.2 a2.2 2.2 0 1 1 3.5 0 M27.0 7.2 a2.2 2.2 0 1 1 3.5 0 M30.4 7.2 V9.5 M33.4 7.2 a2.2 2.2 0 1 1 3.5 0 M42.0 7.2 H55.0 M43.0 7.2 V4.5 M45.3 7.2 V1.0 M49.0 7.2 V1.0 M51.6 7.2 a2.2 2.2 0 1 1 3.5 0 M58.0 7.2 H77.0 M59.0 7.2 V9.5 M62.3 7.2 V4.5 M64.7 7.2 V9.5 M67.8 7.2 V4.5 M70.9 7.2 V1.0 M73.6 7.2 V1.0 M81.0 7.2 H90.0 M82.0 7.2 a2.2 2.2 0 1 1 3.5 0 M84.3 7.2 a2.2 2.2 0 1 1 3.5 0 M86.9 7.2 a2.2 2.2 0 1 1 3.5 0 M93.0 7.2 H101.0 M94.0 7.2 V1.0 M97.6 7.2 V1.0 M107.0 7.2 H112.0 M108.0 7.2 a2.2 2.2 0 1 1 3.5 0" stroke="#e0dc50" stroke-width="1.3" fill="none" stroke-linecap="round"/></svg><svg style="position:absolute;left:118px;top:86px;overflow:visible" width="57" height="10"><path d="M0.0 7.2 H26.0 M1.0 7.2 a2.2 2.2 0 1 1 3.5 0 M4.8 7.2 V4.5 M7.6 7.2 V4.5 M10.5 7.2 V1.0 M13.4 7.2 V4.5 M15.9 7.2 V9.5 M18.8 7.2 V1.0 M21.8 7.2 a2.2 2.2 0 1 1 3.5 0 M30.0 7.2 H43.0 M31.0 7.2 V9.5 M35.1 7.2 V4.5 M38.4 7.2 V1.0 M46.0 7.2 H57.0 M47.0 7.2 V4.5 M50.7 7.2 V4.5 M54.9 7.2 V4.5" stroke="#e0dc50" stroke-width="1.3" fill="none" stroke-linecap="round"/></svg><span class="dur">1:01</span></div>
<div class="ti" style="left:1063px;top:563px">Tudo posso no Mashicha do<br>fortalecer</div>
<div class="me" style="left:1063px;top:611px">26 visualizações <span class="dot">•</span> há 3 meses</div><div class="th" style="left:1277px;top:437px"><div style="position:absolute;left:0px;top:0px;width:210px;height:118px;background:linear-gradient(90deg,#000 0%,#000 15%,#404040 18%,#d8d8d8 23%,#f0f0f0 26%);"></div><div style="position:absolute;left:58px;top:0px;width:8px;height:118px;background:#000;"></div><div style="position:absolute;left:66px;top:0px;width:78px;height:118px;background:#f8f8f8;"></div><div style="position:absolute;left:144px;top:0px;width:8px;height:118px;background:#000;"></div><div style="position:absolute;left:152px;top:0px;width:58px;height:118px;background:linear-gradient(90deg,#f0f0f0 0%,#e8e8e8 22%,#505050 36%,#000 44%,#000 100%);"></div><div style="position:absolute;left:74px;top:3px;color:#111;font-size:5px;line-height:1;white-space:nowrap;font-family:'Liberation Sans';font-weight:bold;letter-spacing:-0.1px">Não fazer marcas para os</div><div style="position:absolute;left:74px;top:8px;color:#111;font-size:5px;line-height:1;white-space:nowrap;font-family:'Liberation Sans';font-weight:bold;letter-spacing:-0.15px">mortos e não fazer tatuagem</div><div style="position:absolute;left:96px;top:25px;width:45px;height:1.4px;background:#999;border-radius:1px"></div><div style="position:absolute;left:88px;top:31px;width:53px;height:1.4px;background:#999;border-radius:1px"></div><div style="position:absolute;left:74px;top:37px;width:61px;height:1.4px;background:#a8a8a8;border-radius:1px"></div><div style="position:absolute;left:74px;top:43px;width:56px;height:1.4px;background:#a8a8a8;border-radius:1px"></div><div style="position:absolute;left:74px;top:49px;width:10px;height:1.4px;background:#a8a8a8;border-radius:1px"></div><div style="position:absolute;left:74px;top:70px;width:64px;height:1.5px;background:#aaa;border-radius:1px"></div><div style="position:absolute;left:76.0px;top:76px;width:5px;height:5px;background:none;border:1px solid #999"></div><div style="position:absolute;left:91.5px;top:76px;width:5px;height:5px;background:none;border:1px solid #999"></div><div style="position:absolute;left:107.0px;top:76px;width:5px;height:5px;background:none;border:1px solid #999"></div><div style="position:absolute;left:122.5px;top:76px;width:5px;height:5px;background:none;border:1px solid #999"></div><div style="position:absolute;left:138.0px;top:76px;width:5px;height:5px;background:none;border:1px solid #999"></div><div style="position:absolute;left:68px;top:85px;width:74px;height:33px;background:#e6e6e6;"></div><div style="position:absolute;left:78px;top:89px;color:#888;font-size:4.5px;line-height:1;white-space:nowrap;">marca    marcar    marcas</div><div style="position:absolute;left:70px;top:99px;color:#777;font-size:5.2px;line-height:1;white-space:nowrap;font-family:'Liberation Sans';letter-spacing:0.9px">q w e r t y u i o p</div><div style="position:absolute;left:75px;top:108px;color:#777;font-size:5.2px;line-height:1;white-space:nowrap;font-family:'Liberation Sans';letter-spacing:0.9px">a s d f g h j k l</div><div style="position:absolute;left:184px;top:12px;width:16px;height:16px;background:#fff;border-radius:50%"></div><svg style="position:absolute;left:184px;top:12px" width="16" height="16"><path d="M8 4 V8.5 L11 11" stroke="#000" stroke-width="1.6" fill="none"/></svg><div style="position:absolute;left:188px;top:46px;width:12px;height:2px;background:#fff;"></div><div style="position:absolute;left:190px;top:50px;width:10px;height:2px;background:#fff;"></div><div style="position:absolute;left:192px;top:54px;width:8px;height:2px;background:#fff;"></div><svg style="position:absolute;left:187px;top:50px" width="5" height="9"><path d="M0 2 L4 4.5 L0 7 Z" fill="#fff"/></svg><span class="dur">7:44</span></div>
<div class="ti" style="left:1277px;top:563px">É permitido fazer tatuagem<br>de acordo com a Toráh?</div>
<div class="me" style="left:1277px;top:611px">43 visualizações <span class="dot">•</span> há 3 meses</div><div class="th" style="left:207px;top:653px"><div style="position:absolute;left:26px;top:0px;width:158px;height:118px;background:linear-gradient(90deg,#1a1e24,#10141a 30%,#10141a 70%,#1a1e24);"></div><div style="position:absolute;left:26px;top:10px;width:24px;height:70px;background:linear-gradient(180deg,rgba(0,0,0,0),#6a6850 15%,#3a4050 40%,#6a4838 60%,#1a1e22 85%);filter:blur(2px)"></div><div style="position:absolute;left:160px;top:10px;width:24px;height:70px;background:linear-gradient(180deg,rgba(0,0,0,0),#2a3040 40%,#3a3038 60%,rgba(0,0,0,0));filter:blur(2px)"></div><div style="position:absolute;left:48px;top:29px;width:114px;height:37px;background:linear-gradient(180deg,#5a6068 0%,#3a4858 30%,#2a3444 52%,#5a3a30 72%,#c06038 82%,#2a2020 92%,#12161c 100%);"></div><div style="position:absolute;left:48px;top:29px;width:70px;height:24px;background:radial-gradient(ellipse at 40% 40%,rgba(220,210,130,.75),rgba(0,0,0,0) 65%);"></div><div style="position:absolute;left:55px;top:6px;color:#e8e8e0;font-size:7.6px;line-height:1;white-space:nowrap;font-family:'Liberation Serif';font-weight:bold;letter-spacing:-0.35px">Quem não se entrega para o Soberano</div><div style="position:absolute;left:55px;top:14px;color:#e8e8e0;font-size:7.6px;line-height:1;white-space:nowrap;font-family:'Liberation Serif';font-weight:bold;letter-spacing:-0.35px">Yashwa Mashicha, seja maldito.</div><div style="position:absolute;left:56px;top:22px;color:#e8e8e0;font-size:7.6px;line-height:1;white-space:nowrap;font-family:'Liberation Serif';font-weight:bold;letter-spacing:-0.3px">Soberano vem.</div><span class="dur">0:51</span></div>
<div class="ti" style="left:207px;top:779px">1 Coríntios 16:22-23-24 em<br>Aramaico<svg width="80" height="14" viewBox="0 0 80 14" style="vertical-align:-1px;margin-left:5px"><g stroke="#030303" stroke-width="1.1" fill="none"><path d="M0.8 2 L8 12 M6.8 2 Q7.5 6 4.5 7.2 M1.2 12 Q1 8.5 4.2 7.4"/><path d="M10.5 2 V6.5"/><path d="M13 2.2 Q15 2 15.2 4 L13.2 12 M15 3.2 H19.6 Q21 3.2 21 5 V12 H16.5"/><path d="M23 2.6 H27.2 Q28.6 2.6 28.6 4.4 V12"/><path d="M30.2 2 L37.4 12 M36.2 2 Q36.9 6 33.9 7.2 M30.6 12 Q30.4 8.5 33.6 7.4"/></g><g stroke="#030303" stroke-width="1.3" fill="none"><path d="M42 11.5 Q44 8 48 9 Q51 10 53 8 M48 9 Q50 12 53 11.5 H58 Q59 9 61 9 Q63 9 63 11.5 H67 Q68 8 70 8 L66 11.5 H72 Q75 11.5 76 9 L78 6 M73 11.5 Q76 12 78 11"/><path d="M59.5 6.5 L60.5 6.5"/></g></svg></div>
<div class="me" style="left:207px;top:827px">23 visualizações <span class="dot">•</span> há 3 meses</div><div class="th" style="left:421px;top:653px"><div style="position:absolute;left:26px;top:0px;width:158px;height:118px;background:linear-gradient(90deg,#2a2420,#1a1a1c 14%,#1a1a1c 86%,#2a2420);"></div><div style="position:absolute;left:26px;top:14px;width:22px;height:80px;background:linear-gradient(180deg,#1a1a1a,#d8d0c8 20%,#8a7a68 50%,#4a3a2c 80%,#2a2420);filter:blur(2px)"></div><div style="position:absolute;left:162px;top:14px;width:22px;height:80px;background:linear-gradient(180deg,#2a2a2a,#b8a890 35%,#6a5a48 70%,#3a3028);filter:blur(2px)"></div><svg style="position:absolute;left:48px;top:33px;filter:blur(0.5px)" width="114" height="58" viewBox="0 0 114 58"><rect width="114" height="58" fill="#9a8670"/><rect width="114" height="14" fill="#c8bca8"/><path d="M40 0 H80 V30 H40 Z" fill="#a89680"/><ellipse cx="12" cy="14" rx="7" ry="9" fill="#6a5040"/><ellipse cx="12" cy="15" rx="4" ry="5" fill="#c8a088"/><path d="M2 20 Q12 16 22 22 V58 H0 Z" fill="#5a4a38"/><ellipse cx="30" cy="20" rx="6" ry="8" fill="#5a4030"/><ellipse cx="30" cy="21" rx="3.5" ry="5" fill="#c09880"/><path d="M20 28 Q30 24 40 30 V58 H18 Z" fill="#3a3028"/><ellipse cx="52" cy="22" rx="6" ry="8" fill="#8a7058"/><path d="M44 30 Q52 26 60 32 V58 H42 Z" fill="#a89070"/><ellipse cx="18" cy="32" rx="6" ry="7" fill="#7a5a44"/><path d="M6 40 Q20 34 36 44 V58 H4 Z" fill="#4a5040"/><path d="M48 34 Q62 24 74 36 L78 58 H40 Z" fill="#d8c8a8"/><ellipse cx="62" cy="42" rx="7" ry="9" fill="#4a3828"/><ellipse cx="62" cy="42" rx="4" ry="6" fill="#9a7858"/><path d="M82 8 Q96 4 100 16 Q104 40 114 58 H76 Q72 30 82 8 Z" fill="#d0c0a0"/><ellipse cx="88" cy="16" rx="7" ry="9" fill="#2a2018"/><ellipse cx="90" cy="18" rx="4" ry="6" fill="#8a6a50"/><path d="M72 22 Q78 18 84 26 L80 58 H70 Z" fill="#7a6a58"/></svg><svg style="position:absolute;left:57px;top:1px;overflow:visible" width="98" height="9"><path d="M0.0 6.5 H18.0 M1.0 6.5 a2.0 2.0 0 1 1 3.2 0 M4.2 6.5 a2.0 2.0 0 1 1 3.2 0 M6.4 6.5 V4.0 M8.9 6.5 a2.0 2.0 0 1 1 3.2 0 M13.0 6.5 V8.5 M15.7 6.5 V8.5 M24.0 6.5 H47.0 M25.0 6.5 V8.5 M29.1 6.5 a2.0 2.0 0 1 1 3.2 0 M32.7 6.5 V4.0 M36.4 6.5 V4.0 M39.0 6.5 a2.0 2.0 0 1 1 3.2 0 M42.7 6.5 V0.9 M53.0 6.5 H69.0 M54.0 6.5 a2.0 2.0 0 1 1 3.2 0 M56.4 6.5 V0.9 M58.7 6.5 V0.9 M62.5 6.5 a2.0 2.0 0 1 1 3.2 0 M66.2 6.5 V4.0 M73.0 6.5 H86.0 M74.0 6.5 V8.5 M78.1 6.5 V4.0 M80.4 6.5 V8.5 M83.5 6.5 V0.9 M90.0 6.5 H98.0 M91.0 6.5 V4.0 M93.4 6.5 a2.0 2.0 0 1 1 3.2 0 M95.9 6.5 a2.0 2.0 0 1 1 3.2 0" stroke="#eee" stroke-width="1.1" fill="none" stroke-linecap="round"/></svg><svg style="position:absolute;left:57px;top:11px;overflow:visible" width="98" height="9"><path d="M0.0 6.5 H21.0 M1.0 6.5 V0.9 M3.3 6.5 V0.9 M5.6 6.5 V0.9 M9.4 6.5 V4.0 M12.7 6.5 V0.9 M15.8 6.5 V0.9 M18.9 6.5 V8.5 M25.0 6.5 H48.0 M26.0 6.5 V4.0 M29.9 6.5 V8.5 M33.2 6.5 V4.0 M36.7 6.5 V4.0 M39.6 6.5 V4.0 M43.6 6.5 V0.9 M51.0 6.5 H70.0 M52.0 6.5 V8.5 M55.5 6.5 V4.0 M58.0 6.5 V0.9 M60.8 6.5 a2.0 2.0 0 1 1 3.2 0 M63.3 6.5 V0.9 M66.4 6.5 V4.0 M76.0 6.5 H88.0 M77.0 6.5 V4.0 M80.4 6.5 a2.0 2.0 0 1 1 3.2 0 M82.7 6.5 a2.0 2.0 0 1 1 3.2 0 M85.7 6.5 V0.9 M91.0 6.5 H98.0 M92.0 6.5 a2.0 2.0 0 1 1 3.2 0 M94.5 6.5 V8.5" stroke="#eee" stroke-width="1.1" fill="none" stroke-linecap="round"/></svg><svg style="position:absolute;left:120px;top:21px;overflow:visible" width="35" height="9"><path d="M0.0 6.5 H23.0 M1.0 6.5 a2.0 2.0 0 1 1 3.2 0 M3.8 6.5 V8.5 M7.6 6.5 V4.0 M11.2 6.5 V8.5 M15.1 6.5 V0.9 M17.5 6.5 V0.9 M28.0 6.5 H35.0 M29.0 6.5 V0.9 M32.2 6.5 V0.9" stroke="#eee" stroke-width="1.1" fill="none" stroke-linecap="round"/></svg><div style="position:absolute;left:59px;top:94px;color:#ddd;font-size:7px;line-height:1;white-space:nowrap;font-family:'Liberation Serif';letter-spacing:-0.2px">Ouviu Yashwa, [que ele foi] expulso</div><div style="position:absolute;left:59px;top:101px;color:#ddd;font-size:7px;line-height:1;white-space:nowrap;font-family:'Liberation Serif';letter-spacing:-0.4px">para fora, e o encontrando falou para ele:</div><div style="position:absolute;left:59px;top:108px;color:#ddd;font-size:7px;line-height:1;white-space:nowrap;font-family:'Liberation Serif';letter-spacing:-0.2px">acreditas no filho de Alaha?</div><div style="position:absolute;left:60px;top:116px;color:#ddd;font-size:7px;line-height:1;white-space:nowrap;font-family:'Liberation Serif'">Heard Yashwa that he was cast out</div><span class="dur">1:21</span></div>
<div class="ti" style="left:421px;top:779px">Acreditas tu no Filho de<br>Alaha?</div>
<div class="me" style="left:421px;top:827px">25 visualizações <span class="dot">•</span> há 4 meses</div><div class="th" style="left:635px;top:653px"><div style="position:absolute;left:26px;top:0px;width:158px;height:118px;background:linear-gradient(90deg,#2aa8d0 0%,#b8e2f0 4%,#e2f2f8 8%,#e2f2f8 14%,#a8dcee 18%,#60c0e0 19%,#60c0e0 81%,#a8dcee 82%,#e2f2f8 86%,#e2f2f8 92%,#b8e2f0 96%,#2aa8d0 100%);"></div><div style="position:absolute;left:26px;top:0px;width:158px;height:118px;background:linear-gradient(90deg,rgba(0,0,0,0) 0%,rgba(0,0,0,0) 18%,#151e2a 19%,#151e2a 81%,rgba(0,0,0,0) 82%);"></div><div style="position:absolute;left:56px;top:0px;width:98px;height:118px;background:#151e2a;"></div><div style="position:absolute;left:57px;top:25px;width:96px;height:72px;background:#28acd0;"></div><div style="position:absolute;left:60px;top:28px;width:90px;height:66px;background:none;border:1px solid #8ad8ee"></div><div style="position:absolute;left:63px;top:31px;width:84px;height:60px;background:#d2def2;"></div><svg style="position:absolute;left:67px;top:39px;overflow:visible" width="79" height="8"><path d="M0.0 5.8 H24.0 M1.0 5.8 V3.6 M4.4 5.8 a1.8 1.8 0 1 1 2.8 0 M7.7 5.8 a1.8 1.8 0 1 1 2.8 0 M11.8 5.8 V7.6 M14.0 5.8 V3.6 M16.9 5.8 V0.8 M20.1 5.8 V7.6 M28.0 5.8 H41.0 M29.0 5.8 V7.6 M31.9 5.8 V0.8 M35.6 5.8 V0.8 M38.9 5.8 V0.8 M45.0 5.8 H69.0 M46.0 5.8 V3.6 M49.8 5.8 V3.6 M53.3 5.8 a1.8 1.8 0 1 1 2.8 0 M56.6 5.8 V7.6 M59.7 5.8 V0.8 M62.4 5.8 a1.8 1.8 0 1 1 2.8 0 M65.9 5.8 V3.6 M75.0 5.8 H79.0 M76.0 5.8 a1.8 1.8 0 1 1 2.8 0" stroke="#333" stroke-width="0.9" fill="none" stroke-linecap="round"/></svg><svg style="position:absolute;left:66px;top:62px;overflow:visible" width="81" height="8"><path d="M0.0 5.8 H26.0 M1.0 5.8 V7.6 M4.5 5.8 V0.8 M7.3 5.8 a1.8 1.8 0 1 1 2.8 0 M11.0 5.8 V0.8 M13.8 5.8 a1.8 1.8 0 1 1 2.8 0 M16.4 5.8 V7.6 M20.4 5.8 a1.8 1.8 0 1 1 2.8 0 M31.0 5.8 H55.0 M32.0 5.8 a1.8 1.8 0 1 1 2.8 0 M36.0 5.8 a1.8 1.8 0 1 1 2.8 0 M39.8 5.8 V3.6 M42.3 5.8 V0.8 M46.4 5.8 V0.8 M49.5 5.8 V3.6 M52.1 5.8 V3.6 M58.0 5.8 H75.0 M59.0 5.8 V7.6 M62.6 5.8 V3.6 M66.8 5.8 V7.6 M70.0 5.8 a1.8 1.8 0 1 1 2.8 0 M72.4 5.8 V3.6" stroke="#333" stroke-width="0.9" fill="none" stroke-linecap="round"/></svg><div style="position:absolute;left:59px;top:106px;color:#ddd;font-size:7px;line-height:1;white-space:nowrap;font-family:'Liberation Serif';font-weight:bold;letter-spacing:-0.3px">Pai do céus sagrado [é teu] nome.</div><span class="dur">1:01</span></div>
<div class="ti" style="left:635px;top:779px">Oração Pai nosso em<br>Aramaico<svg width="48" height="16" viewBox="0 0 48 16" style="vertical-align:-3px;margin-left:5px"><g stroke="#030303" stroke-width="1.2" fill="none"><path d="M1 4 L9 12.5 M8 4 Q7 7 3 11"/><path d="M12 5 L14 3 L16 5"/><path d="M20 2 Q20 4 19 4 M20 3 Q23 3 23 5 V15"/><path d="M26 4 L27 7 Q29 9 31 7 L32 4 M31 7 V15"/><path d="M35 4 L43 12.5 M42 4 Q41 7 37 11"/></g></svg></div>
<div class="me" style="left:635px;top:827px">56 visualizações <span class="dot">•</span> há 4 meses</div><div class="th" style="left:849px;top:653px"><svg style="position:absolute;left:40px;top:36px;overflow:visible" width="135" height="9"><path d="M0.0 6.5 H21.0 M1.0 6.5 V4.0 M5.1 6.5 V8.5 M7.7 6.5 V4.0 M11.7 6.5 a2.0 2.0 0 1 1 3.2 0 M14.9 6.5 a2.0 2.0 0 1 1 3.2 0 M18.0 6.5 V4.0 M25.0 6.5 H51.0 M26.0 6.5 a2.0 2.0 0 1 1 3.2 0 M28.4 6.5 V0.9 M32.4 6.5 V8.5 M34.9 6.5 a2.0 2.0 0 1 1 3.2 0 M37.3 6.5 a2.0 2.0 0 1 1 3.2 0 M39.7 6.5 V4.0 M42.5 6.5 a2.0 2.0 0 1 1 3.2 0 M45.7 6.5 a2.0 2.0 0 1 1 3.2 0 M48.8 6.5 V0.9 M57.0 6.5 H68.0 M58.0 6.5 V4.0 M61.2 6.5 V0.9 M64.9 6.5 V4.0 M72.0 6.5 H83.0 M73.0 6.5 V8.5 M76.9 6.5 V8.5 M79.9 6.5 V0.9 M89.0 6.5 H103.0 M90.0 6.5 V8.5 M92.6 6.5 V4.0 M95.9 6.5 V4.0 M98.1 6.5 V4.0 M106.0 6.5 H128.0 M107.0 6.5 V8.5 M109.9 6.5 V0.9 M114.0 6.5 a2.0 2.0 0 1 1 3.2 0 M116.7 6.5 V4.0 M119.1 6.5 V0.9 M122.6 6.5 V4.0 M125.8 6.5 V0.9" stroke="#eee" stroke-width="1.2" fill="none" stroke-linecap="round"/></svg><svg style="position:absolute;left:54px;top:46px;overflow:visible" width="121" height="9"><path d="M0.0 6.5 H20.0 M1.0 6.5 V8.5 M4.0 6.5 V0.9 M6.3 6.5 V0.9 M8.8 6.5 V0.9 M11.7 6.5 a2.0 2.0 0 1 1 3.2 0 M14.2 6.5 a2.0 2.0 0 1 1 3.2 0 M24.0 6.5 H34.0 M25.0 6.5 V0.9 M28.3 6.5 V0.9 M31.1 6.5 V4.0 M39.0 6.5 H55.0 M40.0 6.5 V4.0 M44.0 6.5 V8.5 M47.1 6.5 V4.0 M51.2 6.5 V0.9 M58.0 6.5 H71.0 M59.0 6.5 a2.0 2.0 0 1 1 3.2 0 M61.2 6.5 a2.0 2.0 0 1 1 3.2 0 M64.5 6.5 V0.9 M68.5 6.5 V4.0 M77.0 6.5 H85.0 M78.0 6.5 V8.5 M80.8 6.5 V8.5 M89.0 6.5 H108.0 M90.0 6.5 V8.5 M93.3 6.5 V4.0 M97.1 6.5 V0.9 M100.7 6.5 a2.0 2.0 0 1 1 3.2 0 M104.8 6.5 V4.0 M113.0 6.5 H121.0 M114.0 6.5 V4.0 M117.8 6.5 a2.0 2.0 0 1 1 3.2 0" stroke="#eee" stroke-width="1.2" fill="none" stroke-linecap="round"/></svg><svg style="position:absolute;left:62px;top:56px;overflow:visible" width="113" height="9"><path d="M0.0 6.5 H23.0 M1.0 6.5 V0.9 M3.7 6.5 V4.0 M7.7 6.5 a2.0 2.0 0 1 1 3.2 0 M11.1 6.5 V4.0 M15.3 6.5 V4.0 M19.1 6.5 a2.0 2.0 0 1 1 3.2 0 M27.0 6.5 H42.0 M28.0 6.5 V4.0 M31.8 6.5 a2.0 2.0 0 1 1 3.2 0 M35.3 6.5 a2.0 2.0 0 1 1 3.2 0 M38.8 6.5 V0.9 M47.0 6.5 H64.0 M48.0 6.5 V0.9 M51.6 6.5 V4.0 M55.5 6.5 a2.0 2.0 0 1 1 3.2 0 M59.7 6.5 V0.9 M68.0 6.5 H89.0 M69.0 6.5 a2.0 2.0 0 1 1 3.2 0 M72.5 6.5 V0.9 M76.4 6.5 V0.9 M79.7 6.5 V8.5 M83.0 6.5 V4.0 M85.5 6.5 V8.5 M95.0 6.5 H113.0 M96.0 6.5 V4.0 M99.4 6.5 V0.9 M102.7 6.5 a2.0 2.0 0 1 1 3.2 0 M106.8 6.5 a2.0 2.0 0 1 1 3.2 0 M110.1 6.5 a2.0 2.0 0 1 1 3.2 0" stroke="#eee" stroke-width="1.2" fill="none" stroke-linecap="round"/></svg><svg style="position:absolute;left:58px;top:66px;overflow:visible" width="117" height="9"><path d="M0.0 6.5 H14.0 M1.0 6.5 V4.0 M4.8 6.5 a2.0 2.0 0 1 1 3.2 0 M7.4 6.5 a2.0 2.0 0 1 1 3.2 0 M11.4 6.5 V0.9 M17.0 6.5 H39.0 M18.0 6.5 a2.0 2.0 0 1 1 3.2 0 M22.0 6.5 V4.0 M25.6 6.5 a2.0 2.0 0 1 1 3.2 0 M28.7 6.5 V4.0 M31.1 6.5 V4.0 M33.6 6.5 V0.9 M44.0 6.5 H55.0 M45.0 6.5 V8.5 M48.7 6.5 V0.9 M52.7 6.5 V0.9 M59.0 6.5 H68.0 M60.0 6.5 a2.0 2.0 0 1 1 3.2 0 M64.0 6.5 V0.9 M72.0 6.5 H92.0 M73.0 6.5 a2.0 2.0 0 1 1 3.2 0 M77.1 6.5 V8.5 M80.8 6.5 V4.0 M84.7 6.5 a2.0 2.0 0 1 1 3.2 0 M88.8 6.5 V0.9 M98.0 6.5 H117.0 M99.0 6.5 V0.9 M101.5 6.5 a2.0 2.0 0 1 1 3.2 0 M104.1 6.5 V0.9 M108.1 6.5 a2.0 2.0 0 1 1 3.2 0 M111.1 6.5 a2.0 2.0 0 1 1 3.2 0 M113.8 6.5 V0.9" stroke="#eee" stroke-width="1.2" fill="none" stroke-linecap="round"/></svg><svg style="position:absolute;left:140px;top:76px;overflow:visible" width="35" height="9"><path d="M0.0 6.5 H26.0 M1.0 6.5 a2.0 2.0 0 1 1 3.2 0 M5.2 6.5 V0.9 M8.7 6.5 V4.0 M12.0 6.5 a2.0 2.0 0 1 1 3.2 0 M16.1 6.5 V4.0 M19.9 6.5 V8.5 M23.8 6.5 a2.0 2.0 0 1 1 3.2 0 M29.0 6.5 H35.0 M30.0 6.5 V0.9" stroke="#eee" stroke-width="1.2" fill="none" stroke-linecap="round"/></svg><span class="dur">2:04</span></div>
<div class="ti" style="left:849px;top:779px">Quando o céus abriu: Eu<br>contemplei.</div>
<div class="me" style="left:849px;top:827px">21 visualizações <span class="dot">•</span> há 4 meses</div><div class="th" style="left:1063px;top:653px"><div style="position:absolute;left:26px;top:0px;width:158px;height:118px;background:linear-gradient(90deg,#e6f6ec,#eefaf4 50%,#e8f6ee);"></div><div style="position:absolute;left:26px;top:0px;width:2px;height:118px;background:#fff;"></div><div style="position:absolute;left:95px;top:0px;width:25px;height:8px;background:linear-gradient(180deg,#98a898,#d8e4dc);filter:blur(1.5px)"></div><div style="position:absolute;left:95px;top:110px;width:25px;height:8px;background:linear-gradient(0deg,#98a898,#d8e4dc);filter:blur(1.5px)"></div><div style="position:absolute;left:102px;top:9.0px;width:9px;height:3.6px;background:linear-gradient(90deg,#181818 30%,#c8d0c8 50%,#181818 75%);border:1.3px solid #181818;border-radius:1.8px"></div><div style="position:absolute;left:102px;top:14.8px;width:9px;height:3.6px;background:linear-gradient(90deg,#181818 30%,#c8d0c8 50%,#181818 75%);border:1.3px solid #181818;border-radius:1.8px"></div><div style="position:absolute;left:102px;top:20.6px;width:9px;height:3.6px;background:linear-gradient(90deg,#181818 30%,#c8d0c8 50%,#181818 75%);border:1.3px solid #181818;border-radius:1.8px"></div><div style="position:absolute;left:102px;top:26.4px;width:9px;height:3.6px;background:linear-gradient(90deg,#181818 30%,#c8d0c8 50%,#181818 75%);border:1.3px solid #181818;border-radius:1.8px"></div><div style="position:absolute;left:102px;top:32.2px;width:9px;height:3.6px;background:linear-gradient(90deg,#181818 30%,#c8d0c8 50%,#181818 75%);border:1.3px solid #181818;border-radius:1.8px"></div><div style="position:absolute;left:102px;top:38.0px;width:9px;height:3.6px;background:linear-gradient(90deg,#181818 30%,#c8d0c8 50%,#181818 75%);border:1.3px solid #181818;border-radius:1.8px"></div><div style="position:absolute;left:102px;top:43.8px;width:9px;height:3.6px;background:linear-gradient(90deg,#181818 30%,#c8d0c8 50%,#181818 75%);border:1.3px solid #181818;border-radius:1.8px"></div><div style="position:absolute;left:102px;top:49.6px;width:9px;height:3.6px;background:linear-gradient(90deg,#181818 30%,#c8d0c8 50%,#181818 75%);border:1.3px solid #181818;border-radius:1.8px"></div><div style="position:absolute;left:102px;top:55.4px;width:9px;height:3.6px;background:linear-gradient(90deg,#181818 30%,#c8d0c8 50%,#181818 75%);border:1.3px solid #181818;border-radius:1.8px"></div><div style="position:absolute;left:102px;top:61.199999999999996px;width:9px;height:3.6px;background:linear-gradient(90deg,#181818 30%,#c8d0c8 50%,#181818 75%);border:1.3px solid #181818;border-radius:1.8px"></div><div style="position:absolute;left:102px;top:67.0px;width:9px;height:3.6px;background:linear-gradient(90deg,#181818 30%,#c8d0c8 50%,#181818 75%);border:1.3px solid #181818;border-radius:1.8px"></div><div style="position:absolute;left:102px;top:72.8px;width:9px;height:3.6px;background:linear-gradient(90deg,#181818 30%,#c8d0c8 50%,#181818 75%);border:1.3px solid #181818;border-radius:1.8px"></div><div style="position:absolute;left:102px;top:78.6px;width:9px;height:3.6px;background:linear-gradient(90deg,#181818 30%,#c8d0c8 50%,#181818 75%);border:1.3px solid #181818;border-radius:1.8px"></div><div style="position:absolute;left:102px;top:84.39999999999999px;width:9px;height:3.6px;background:linear-gradient(90deg,#181818 30%,#c8d0c8 50%,#181818 75%);border:1.3px solid #181818;border-radius:1.8px"></div><div style="position:absolute;left:102px;top:90.2px;width:9px;height:3.6px;background:linear-gradient(90deg,#181818 30%,#c8d0c8 50%,#181818 75%);border:1.3px solid #181818;border-radius:1.8px"></div><div style="position:absolute;left:102px;top:96.0px;width:9px;height:3.6px;background:linear-gradient(90deg,#181818 30%,#c8d0c8 50%,#181818 75%);border:1.3px solid #181818;border-radius:1.8px"></div><div style="position:absolute;left:102px;top:101.8px;width:9px;height:3.6px;background:linear-gradient(90deg,#181818 30%,#c8d0c8 50%,#181818 75%);border:1.3px solid #181818;border-radius:1.8px"></div><div style="position:absolute;left:102px;top:107.6px;width:9px;height:3.6px;background:linear-gradient(90deg,#181818 30%,#c8d0c8 50%,#181818 75%);border:1.3px solid #181818;border-radius:1.8px"></div><div style="position:absolute;left:102px;top:113.39999999999999px;width:9px;height:3.6px;background:linear-gradient(90deg,#181818 30%,#c8d0c8 50%,#181818 75%);border:1.3px solid #181818;border-radius:1.8px"></div><div style="position:absolute;left:102px;top:119.2px;width:9px;height:3.6px;background:linear-gradient(90deg,#181818 30%,#c8d0c8 50%,#181818 75%);border:1.3px solid #181818;border-radius:1.8px"></div><svg style="position:absolute;left:34px;top:14px;overflow:visible" width="63" height="7"><path d="M0.0 5.0 H24.0 M1.0 5.0 V0.7 M3.5 5.0 V3.1 M7.6 5.0 a1.5 1.5 0 1 1 2.5 0 M9.9 5.0 V3.1 M13.6 5.0 a1.5 1.5 0 1 1 2.5 0 M17.2 5.0 a1.5 1.5 0 1 1 2.5 0 M19.5 5.0 V3.1 M30.0 5.0 H38.0 M31.0 5.0 V3.1 M34.9 5.0 V3.1 M44.0 5.0 H63.0 M45.0 5.0 V0.7 M47.9 5.0 V6.6 M51.2 5.0 a1.5 1.5 0 1 1 2.5 0 M54.2 5.0 V3.1 M56.8 5.0 a1.5 1.5 0 1 1 2.5 0 M60.5 5.0 V6.6" stroke="#3a5aa8" stroke-width="1.3" fill="none" stroke-linecap="round"/></svg><svg style="position:absolute;left:31px;top:21px;overflow:visible" width="66" height="7"><path d="M0.0 5.0 H9.0 M1.0 5.0 V6.6 M4.5 5.0 a1.5 1.5 0 1 1 2.5 0 M14.0 5.0 H36.0 M15.0 5.0 a1.5 1.5 0 1 1 2.5 0 M17.6 5.0 a1.5 1.5 0 1 1 2.5 0 M20.4 5.0 V3.1 M22.7 5.0 a1.5 1.5 0 1 1 2.5 0 M26.2 5.0 V3.1 M29.0 5.0 V0.7 M32.1 5.0 V3.1 M40.0 5.0 H53.0 M41.0 5.0 a1.5 1.5 0 1 1 2.5 0 M45.1 5.0 V6.6 M48.2 5.0 V0.7 M57.0 5.0 H66.0 M58.0 5.0 V3.1 M62.2 5.0 V3.1" stroke="#3a5aa8" stroke-width="1.3" fill="none" stroke-linecap="round"/></svg><div style="position:absolute;left:33px;top:30px;color:#4a70b0;font-size:7.2px;line-height:1;white-space:nowrap;font-family:'Liberation Serif'">halalw-Yah shyrw</div><div style="position:absolute;left:33px;top:37px;color:#4a70b0;font-size:7.2px;line-height:1;white-space:nowrap;font-family:'Liberation Serif'">la-Yahawah</div><div style="position:absolute;left:33px;top:44px;color:#4a70b0;font-size:7.2px;line-height:1;white-space:nowrap;font-family:'Liberation Serif';letter-spacing:-0.2px">shyr chādash thahalathw</div><div style="position:absolute;left:33px;top:51px;color:#4a70b0;font-size:7.2px;line-height:1;white-space:nowrap;font-family:'Liberation Serif'">ba-qahal</div><span class="dur">0:51</span></div>
<div class="ti" style="left:1063px;top:779px">Thelihim (Salmos)<br>149:1-4Hebrew Alaph'Bait…</div>
<div class="me" style="left:1063px;top:827px">205 visualizações <span class="dot">•</span> há 4 meses</div><div class="th" style="left:1277px;top:653px"><div style="position:absolute;left:26px;top:0px;width:158px;height:118px;background:#141c28;"></div><svg style="position:absolute;left:70px;top:0px;overflow:visible" width="95" height="8"><path d="M0.0 5.8 H25.0 M1.0 5.8 a1.8 1.8 0 1 1 2.8 0 M4.0 5.8 V3.6 M7.9 5.8 a1.8 1.8 0 1 1 2.8 0 M11.4 5.8 a1.8 1.8 0 1 1 2.8 0 M14.3 5.8 V0.8 M16.8 5.8 V3.6 M20.8 5.8 V0.8 M29.0 5.8 H43.0 M30.0 5.8 V3.6 M32.6 5.8 V3.6 M36.0 5.8 V7.6 M38.3 5.8 a1.8 1.8 0 1 1 2.8 0 M46.0 5.8 H69.0 M47.0 5.8 V0.8 M49.5 5.8 a1.8 1.8 0 1 1 2.8 0 M52.8 5.8 V7.6 M55.1 5.8 V7.6 M57.3 5.8 a1.8 1.8 0 1 1 2.8 0 M60.8 5.8 V3.6 M64.9 5.8 V3.6 M73.0 5.8 H90.0 M74.0 5.8 V0.8 M77.6 5.8 V3.6 M81.4 5.8 a1.8 1.8 0 1 1 2.8 0 M84.3 5.8 V7.6" stroke="#e0e0d0" stroke-width="1.0" fill="none" stroke-linecap="round"/></svg><svg style="position:absolute;left:68px;top:7px;overflow:visible" width="97" height="8"><path d="M0.0 5.8 H19.0 M1.0 5.8 V0.8 M3.8 5.8 a1.8 1.8 0 1 1 2.8 0 M6.1 5.8 a1.8 1.8 0 1 1 2.8 0 M9.4 5.8 V3.6 M12.0 5.8 V7.6 M15.9 5.8 a1.8 1.8 0 1 1 2.8 0 M22.0 5.8 H43.0 M23.0 5.8 V0.8 M26.3 5.8 V3.6 M29.5 5.8 V0.8 M32.4 5.8 V0.8 M35.4 5.8 V0.8 M38.6 5.8 V7.6 M49.0 5.8 H74.0 M50.0 5.8 a1.8 1.8 0 1 1 2.8 0 M52.2 5.8 a1.8 1.8 0 1 1 2.8 0 M54.5 5.8 a1.8 1.8 0 1 1 2.8 0 M58.1 5.8 a1.8 1.8 0 1 1 2.8 0 M61.3 5.8 V3.6 M63.5 5.8 a1.8 1.8 0 1 1 2.8 0 M66.0 5.8 a1.8 1.8 0 1 1 2.8 0 M68.9 5.8 a1.8 1.8 0 1 1 2.8 0 M79.0 5.8 H95.0 M80.0 5.8 V0.8 M82.8 5.8 V3.6 M85.4 5.8 V7.6 M88.6 5.8 V0.8 M91.4 5.8 V0.8" stroke="#e0e0d0" stroke-width="1.0" fill="none" stroke-linecap="round"/></svg><svg style="position:absolute;left:88px;top:16px;overflow:visible" width="77" height="8"><path d="M0.0 5.8 H18.0 M1.0 5.8 a1.8 1.8 0 1 1 2.8 0 M4.8 5.8 V3.6 M8.8 5.8 a1.8 1.8 0 1 1 2.8 0 M12.8 5.8 V0.8 M21.0 5.8 H40.0 M22.0 5.8 V7.6 M24.5 5.8 a1.8 1.8 0 1 1 2.8 0 M27.0 5.8 V3.6 M30.6 5.8 V7.6 M32.9 5.8 a1.8 1.8 0 1 1 2.8 0 M36.9 5.8 a1.8 1.8 0 1 1 2.8 0 M46.0 5.8 H57.0 M47.0 5.8 V3.6 M49.6 5.8 V0.8 M52.5 5.8 a1.8 1.8 0 1 1 2.8 0 M61.0 5.8 H77.0 M62.0 5.8 a1.8 1.8 0 1 1 2.8 0 M64.5 5.8 a1.8 1.8 0 1 1 2.8 0 M67.9 5.8 V7.6 M70.6 5.8 V0.8 M73.5 5.8 a1.8 1.8 0 1 1 2.8 0" stroke="#e0e0d0" stroke-width="1.0" fill="none" stroke-linecap="round"/></svg><div style="position:absolute;left:48px;top:35px;color:#e8e8d0;font-size:8.6px;line-height:1;white-space:nowrap;font-family:'Liberation Sans';letter-spacing:-0.2px;-webkit-text-stroke:0.3px currentColor;width:115px;text-align:right;letter-spacing:0.3px">x7n ]'xn7 ]y7a 1nix p'xn7</div><div style="position:absolute;left:40px;top:45px;color:#e8e8d0;font-size:8.6px;line-height:1;white-space:nowrap;font-family:'Liberation Sans';letter-spacing:-0.2px;-webkit-text-stroke:0.3px currentColor;width:123px;text-align:right;letter-spacing:0.3px">17'y7^a 1nxin 'n7^ ]n'n1</div><div style="position:absolute;left:80px;top:55px;color:#e8e8d0;font-size:8.6px;line-height:1;white-space:nowrap;font-family:'Liberation Sans';letter-spacing:-0.2px;-webkit-text-stroke:0.3px currentColor;width:83px;text-align:right;letter-spacing:0.3px">xnnxn' ]^'x</div><div style="position:absolute;left:37px;top:68px;color:#e8e8dc;font-size:8.6px;line-height:1;white-space:nowrap;font-family:'Liberation Serif';font-weight:bold;letter-spacing:-0.3px">w-apēq ēnwn lē'bar w-amār mwa</div><div style="position:absolute;left:37px;top:77px;color:#e8e8dc;font-size:8.6px;line-height:1;white-space:nowrap;font-family:'Liberation Serif';font-weight:bold;letter-spacing:-0.4px">lē'hwn māray mānā w-ālē ly lē'mebad</div><div style="position:absolute;left:37px;top:86px;color:#e8e8dc;font-size:8.6px;line-height:1;white-space:nowrap;font-family:'Liberation Serif';font-weight:bold">aykh dē'echē</div><div style="position:absolute;left:37px;top:105px;color:#e8e8dc;font-size:8.6px;line-height:1;white-space:nowrap;font-family:'Liberation Serif';font-weight:bold;letter-spacing:-0.4px">E saiu eles para fora, e falou: Mestre</div><div style="position:absolute;left:37px;top:114px;color:#e8e8dc;font-size:8.6px;line-height:1;white-space:nowrap;font-family:'Liberation Serif';font-weight:bold;letter-spacing:-0.4px">o que é adequado para se fazer</div><span class="dur">0:40</span></div>
<div class="ti" style="left:1277px;top:779px">Atos 16:30-32</div>
<div class="me" style="left:1277px;top:807px">22 visualizações <span class="dot">•</span> há 4 meses</div><div class="th" style="left:207px;top:869px;height:28px"><div style="position:absolute;left:26px;top:0px;width:158px;height:28px;background:linear-gradient(90deg,#000,#141414 20%,#000 30%,#000 70%,#141414 80%,#000);"></div><svg style="position:absolute;left:70px;top:2px;overflow:visible" width="75" height="6"><path d="M0.0 4.3 H26.0 M1.0 4.3 V5.7 M3.3 4.3 V2.7 M7.2 4.3 V2.7 M10.9 4.3 V0.6 M14.0 4.3 V2.7 M16.3 4.3 V2.7 M18.7 4.3 V2.7 M21.5 4.3 V0.6 M32.0 4.3 H51.0 M33.0 4.3 a1.3 1.3 0 1 1 2.1 0 M36.5 4.3 V0.6 M39.1 4.3 V0.6 M43.0 4.3 V5.7 M46.6 4.3 a1.3 1.3 0 1 1 2.1 0 M57.0 4.3 H72.0 M58.0 4.3 V2.7 M60.6 4.3 V0.6 M64.8 4.3 V2.7 M67.2 4.3 V5.7" stroke="#ccc" stroke-width="0.9" fill="none" stroke-linecap="round"/></svg><svg style="position:absolute;left:60px;top:8px;overflow:visible" width="85" height="6"><path d="M0.0 4.3 H22.0 M1.0 4.3 a1.3 1.3 0 1 1 2.1 0 M3.7 4.3 a1.3 1.3 0 1 1 2.1 0 M7.7 4.3 V0.6 M11.3 4.3 V0.6 M14.5 4.3 V5.7 M17.2 4.3 V0.6 M25.0 4.3 H36.0 M26.0 4.3 V0.6 M30.0 4.3 V5.7 M33.3 4.3 a1.3 1.3 0 1 1 2.1 0 M39.0 4.3 H54.0 M40.0 4.3 a1.3 1.3 0 1 1 2.1 0 M43.5 4.3 a1.3 1.3 0 1 1 2.1 0 M46.4 4.3 V2.7 M49.6 4.3 a1.3 1.3 0 1 1 2.1 0 M58.0 4.3 H72.0 M59.0 4.3 a1.3 1.3 0 1 1 2.1 0 M62.9 4.3 a1.3 1.3 0 1 1 2.1 0 M66.0 4.3 V5.7 M68.9 4.3 V0.6 M78.0 4.3 H85.0 M79.0 4.3 a1.3 1.3 0 1 1 2.1 0 M82.1 4.3 V0.6" stroke="#ccc" stroke-width="0.9" fill="none" stroke-linecap="round"/></svg><svg style="position:absolute;left:60px;top:15px;overflow:visible" width="85" height="6"><path d="M0.0 4.3 H11.0 M1.0 4.3 V0.6 M4.9 4.3 a1.3 1.3 0 1 1 2.1 0 M8.7 4.3 V2.7 M14.0 4.3 H22.0 M15.0 4.3 V5.7 M19.0 4.3 V0.6 M26.0 4.3 H51.0 M27.0 4.3 V2.7 M29.2 4.3 V0.6 M32.7 4.3 a1.3 1.3 0 1 1 2.1 0 M36.4 4.3 V2.7 M39.3 4.3 V2.7 M43.2 4.3 V5.7 M46.0 4.3 V2.7 M56.0 4.3 H73.0 M57.0 4.3 V2.7 M59.3 4.3 a1.3 1.3 0 1 1 2.1 0 M62.0 4.3 V0.6 M64.7 4.3 V0.6 M67.4 4.3 V0.6 M70.4 4.3 V5.7 M76.0 4.3 H85.0 M77.0 4.3 a1.3 1.3 0 1 1 2.1 0 M79.3 4.3 V0.6" stroke="#ccc" stroke-width="0.9" fill="none" stroke-linecap="round"/></svg><svg style="position:absolute;left:65px;top:22px;overflow:visible" width="80" height="6"><path d="M0.0 4.3 H16.0 M1.0 4.3 V0.6 M4.6 4.3 V2.7 M7.4 4.3 a1.3 1.3 0 1 1 2.1 0 M11.5 4.3 V2.7 M20.0 4.3 H42.0 M21.0 4.3 a1.3 1.3 0 1 1 2.1 0 M23.2 4.3 a1.3 1.3 0 1 1 2.1 0 M26.1 4.3 a1.3 1.3 0 1 1 2.1 0 M28.4 4.3 V5.7 M30.9 4.3 V2.7 M33.3 4.3 V2.7 M35.7 4.3 V2.7 M38.5 4.3 V2.7 M45.0 4.3 H62.0 M46.0 4.3 a1.3 1.3 0 1 1 2.1 0 M48.9 4.3 V5.7 M53.0 4.3 V2.7 M56.8 4.3 a1.3 1.3 0 1 1 2.1 0 M59.2 4.3 V2.7 M66.0 4.3 H80.0 M67.0 4.3 V0.6 M70.5 4.3 V2.7 M73.1 4.3 V5.7 M75.9 4.3 a1.3 1.3 0 1 1 2.1 0" stroke="#ccc" stroke-width="0.9" fill="none" stroke-linecap="round"/></svg></div><div class="th" style="left:421px;top:869px;height:28px"><div style="position:absolute;left:26px;top:0px;width:30px;height:28px;background:linear-gradient(90deg,#4a2a20,#8a5a48);"></div><div style="position:absolute;left:56px;top:0px;width:98px;height:28px;background:linear-gradient(90deg,#6a2810 0%,#c04a18 15%,#d06a30 30%,#c8a878 45%,#d8c098 60%,#b89870 75%,#8a6040 90%,#4a2a18 100%);"></div><div style="position:absolute;left:56px;top:14px;width:98px;height:14px;background:linear-gradient(180deg,rgba(0,0,0,0),rgba(40,30,20,.6));"></div><div style="position:absolute;left:95px;top:6px;width:40px;height:14px;background:radial-gradient(ellipse,rgba(230,210,160,.7),rgba(0,0,0,0) 70%);"></div><div style="position:absolute;left:154px;top:0px;width:30px;height:28px;background:linear-gradient(90deg,#b08070,#c09888);"></div></div><div class="th" style="left:635px;top:869px;height:28px"><div style="position:absolute;left:26px;top:0px;width:158px;height:28px;background:linear-gradient(90deg,#4a98c8,#8ac0e0 12%,#1a1e26 26%,#1a1e26 74%,#8ac0e0 88%,#4a98c8);"></div><svg style="position:absolute;left:62px;top:1px;overflow:visible" width="80" height="7"><path d="M0.0 5.0 H10.0 M1.0 5.0 V6.6 M4.0 5.0 V3.1 M6.9 5.0 V6.6 M15.0 5.0 H37.0 M16.0 5.0 a1.5 1.5 0 1 1 2.5 0 M19.3 5.0 a1.5 1.5 0 1 1 2.5 0 M23.4 5.0 V3.1 M25.7 5.0 V0.7 M29.7 5.0 V3.1 M31.9 5.0 V0.7 M41.0 5.0 H64.0 M42.0 5.0 V6.6 M44.3 5.0 a1.5 1.5 0 1 1 2.5 0 M46.6 5.0 V6.6 M49.6 5.0 a1.5 1.5 0 1 1 2.5 0 M53.4 5.0 V3.1 M56.9 5.0 V0.7 M59.3 5.0 a1.5 1.5 0 1 1 2.5 0 M70.0 5.0 H80.0 M71.0 5.0 V0.7 M74.1 5.0 V0.7" stroke="#ddd" stroke-width="1" fill="none" stroke-linecap="round"/></svg><svg style="position:absolute;left:72px;top:9px;overflow:visible" width="70" height="7"><path d="M0.0 5.0 H20.0 M1.0 5.0 V6.6 M4.0 5.0 V0.7 M7.6 5.0 V3.1 M10.6 5.0 V3.1 M12.9 5.0 a1.5 1.5 0 1 1 2.5 0 M15.5 5.0 a1.5 1.5 0 1 1 2.5 0 M24.0 5.0 H44.0 M25.0 5.0 a1.5 1.5 0 1 1 2.5 0 M27.5 5.0 a1.5 1.5 0 1 1 2.5 0 M31.1 5.0 V6.6 M33.4 5.0 V0.7 M36.1 5.0 a1.5 1.5 0 1 1 2.5 0 M40.0 5.0 V0.7 M48.0 5.0 H59.0 M49.0 5.0 V0.7 M51.7 5.0 V0.7 M55.8 5.0 V0.7 M63.0 5.0 H70.0 M64.0 5.0 a1.5 1.5 0 1 1 2.5 0 M66.7 5.0 V3.1" stroke="#ddd" stroke-width="1" fill="none" stroke-linecap="round"/></svg><svg style="position:absolute;left:82px;top:17px;overflow:visible" width="60" height="7"><path d="M0.0 5.0 H10.0 M1.0 5.0 V0.7 M4.2 5.0 V3.1 M6.4 5.0 V3.1 M15.0 5.0 H30.0 M16.0 5.0 V6.6 M19.8 5.0 a1.5 1.5 0 1 1 2.5 0 M22.1 5.0 V3.1 M24.6 5.0 a1.5 1.5 0 1 1 2.5 0 M35.0 5.0 H60.0 M36.0 5.0 V0.7 M39.0 5.0 V0.7 M42.7 5.0 V0.7 M45.0 5.0 a1.5 1.5 0 1 1 2.5 0 M47.7 5.0 V0.7 M50.0 5.0 V3.1 M52.9 5.0 a1.5 1.5 0 1 1 2.5 0 M56.1 5.0 V3.1" stroke="#ddd" stroke-width="1" fill="none" stroke-linecap="round"/></svg></div><div class="th" style="left:849px;top:869px;height:28px"><svg style="position:absolute;left:76px;top:8px;overflow:visible" width="86" height="9"><path d="M0.0 6.5 H26.0 M1.0 6.5 a2.0 2.0 0 1 1 3.2 0 M3.7 6.5 a2.0 2.0 0 1 1 3.2 0 M7.7 6.5 a2.0 2.0 0 1 1 3.2 0 M11.8 6.5 V8.5 M15.1 6.5 a2.0 2.0 0 1 1 3.2 0 M18.6 6.5 a2.0 2.0 0 1 1 3.2 0 M21.6 6.5 V4.0 M30.0 6.5 H49.0 M31.0 6.5 V0.9 M34.5 6.5 V8.5 M38.6 6.5 V8.5 M41.9 6.5 V4.0 M44.4 6.5 V0.9 M55.0 6.5 H79.0 M56.0 6.5 a2.0 2.0 0 1 1 3.2 0 M59.5 6.5 a2.0 2.0 0 1 1 3.2 0 M61.9 6.5 a2.0 2.0 0 1 1 3.2 0 M64.9 6.5 V8.5 M67.7 6.5 V4.0 M70.5 6.5 V0.9 M74.3 6.5 a2.0 2.0 0 1 1 3.2 0" stroke="#eee" stroke-width="1.2" fill="none" stroke-linecap="round"/></svg><svg style="position:absolute;left:28px;top:18px;overflow:visible" width="134" height="9"><path d="M0.0 6.5 H20.0 M1.0 6.5 V8.5 M3.3 6.5 a2.0 2.0 0 1 1 3.2 0 M6.1 6.5 V0.9 M10.1 6.5 V0.9 M12.7 6.5 V4.0 M15.6 6.5 V4.0 M26.0 6.5 H43.0 M27.0 6.5 a2.0 2.0 0 1 1 3.2 0 M29.8 6.5 V0.9 M32.1 6.5 V0.9 M34.8 6.5 a2.0 2.0 0 1 1 3.2 0 M38.2 6.5 a2.0 2.0 0 1 1 3.2 0 M40.4 6.5 a2.0 2.0 0 1 1 3.2 0 M48.0 6.5 H73.0 M49.0 6.5 V0.9 M52.6 6.5 V4.0 M55.2 6.5 V4.0 M58.5 6.5 V4.0 M61.8 6.5 V4.0 M65.6 6.5 V4.0 M68.0 6.5 V4.0 M77.0 6.5 H100.0 M78.0 6.5 V4.0 M81.4 6.5 V0.9 M84.1 6.5 V0.9 M86.8 6.5 V0.9 M90.9 6.5 V8.5 M93.4 6.5 V0.9 M97.1 6.5 V0.9 M105.0 6.5 H118.0 M106.0 6.5 V0.9 M108.5 6.5 V8.5 M111.6 6.5 a2.0 2.0 0 1 1 3.2 0 M115.7 6.5 V0.9 M121.0 6.5 H132.0 M122.0 6.5 V0.9 M126.2 6.5 V0.9 M129.1 6.5 a2.0 2.0 0 1 1 3.2 0" stroke="#eee" stroke-width="1.2" fill="none" stroke-linecap="round"/></svg></div><div class="th" style="left:1063px;top:869px;height:28px"><div style="position:absolute;left:26px;top:0px;width:23px;height:28px;background:linear-gradient(90deg,#e0e0e0,#909090);"></div><div style="position:absolute;left:49px;top:0px;width:111px;height:28px;background:#181818;"></div><div style="position:absolute;left:160px;top:0px;width:24px;height:28px;background:linear-gradient(90deg,#1a78c0,#0a5aa0);"></div><svg style="position:absolute;left:88px;top:0px;overflow:visible" width="30" height="6"><path d="M0.0 4.3 H15.0 M1.0 4.3 a1.3 1.3 0 1 1 2.1 0 M4.2 4.3 a1.3 1.3 0 1 1 2.1 0 M7.9 4.3 V2.7 M11.9 4.3 a1.3 1.3 0 1 1 2.1 0 M18.0 4.3 H27.0 M19.0 4.3 V2.7 M22.5 4.3 V0.6" stroke="#d8a860" stroke-width="1" fill="none" stroke-linecap="round"/></svg><div style="position:absolute;left:74px;top:11px;color:#c0a0a0;font-size:11px;line-height:1;white-space:nowrap;font-family:'Liberation Sans';letter-spacing:0.6px;background:linear-gradient(90deg,#e09060,#d0c080,#80c0a0,#a090d0);-webkit-background-clip:text;color:transparent">Aramaico</div><div style="position:absolute;left:60px;top:25px;width:100px;height:3px;background:#3a90d0;"></div></div><div class="th" style="left:1277px;top:869px;height:28px"><div style="position:absolute;left:26px;top:0px;width:158px;height:28px;background:linear-gradient(180deg,#182850,#24345a);"></div><div style="position:absolute;left:75px;top:0px;width:60px;height:28px;background:radial-gradient(ellipse at 50% 10%,#e8b848 0%,#8a6830 35%,rgba(0,0,0,0) 70%);"></div><div style="position:absolute;left:95px;top:16px;width:20px;height:12px;background:radial-gradient(ellipse at 50% 100%,#ff9a30,rgba(0,0,0,0) 70%);"></div><div style="position:absolute;left:175px;top:14px;width:5px;height:6px;background:#ddd;border-radius:1px"></div></div>
<div class="abs" style="left:1473px;top:563px;width:4px;height:4px;border-radius:50%;background:#909090"></div>
<div class="abs" style="left:1473px;top:569px;width:4px;height:4px;border-radius:50%;background:#909090"></div>
<div class="abs" style="left:1473px;top:575px;width:4px;height:4px;border-radius:50%;background:#909090"></div>
<div id="taskbar"></div>
<div class="abs" style="left:416px;top:897px;width:48px;height:39px;background:#333"></div>
<div class="abs" style="left:416px;top:934px;width:48px;height:2px;background:#76b9ed"></div>
<div class="abs" style="left:469px;top:934px;width:40px;height:2px;background:#76b9ed"></div>
<svg class="abs" style="left:170px;top:897px" width="350" height="39" viewBox="0 0 350 39">
<g stroke="#fff" stroke-width="1" fill="none"><rect x="15.5" y="16.5" width="10" height="6"/><path d="M15.5 12 V14.5 H25.5 V12 M15.5 27 V24.5 H25.5 V27 M29.5 12 V14.5 M29.5 20 V27"/></g><rect x="28" y="16" width="3" height="3" fill="#fff"/>
<path fill-rule="evenodd" d="M64 18.5 C66 11 71 9 75 9 C81 9 84.5 13 84.5 19 V23 H71 C71.5 26.5 74 27.5 77 27.5 C79.5 27.5 82 26.8 83 26.3 V30 C81 30.8 78.5 31 76.5 31 C69.5 31 66 27.5 66 22 C66 19 67.5 16.5 70 15 C67.5 15.5 65.5 16.8 64 18.5 Z M71 17.4 H78 C77.8 15.2 76.5 14.2 74.6 14.2 C72.8 14.2 71.4 15.5 71 17.4 Z" fill="#0f7ad8"/>
<path d="M112 11 H120 L122 13 H133 V29 H112 Z" fill="#f8d575"/><rect x="112" y="11" width="9" height="3" fill="#e0a820"/>
<path d="M118 29 V21 H129 V29 H126 V24 H121 V29 Z" fill="#3a8ad8"/>
<path d="M160 14 H183 V32 H160 Z" fill="#f2f2f2"/><path d="M166 14 V10 Q166 8 168 8 H175 Q177 8 177 10 V14" stroke="#ddd" stroke-width="1.8" fill="none"/>
<rect x="167" y="19" width="4" height="4" fill="#f25022"/><rect x="172" y="19" width="4" height="4" fill="#7fba00"/><rect x="167" y="24" width="4" height="4" fill="#00a4ef"/><rect x="172" y="24" width="4" height="4" fill="#ffb900"/>
<path d="M209 15 L221 8.5 L233 15 V31 H209 Z" fill="#1a7ad0"/><path d="M209 16 H233 L221 24 Z" fill="#f0f0f0"/><path d="M209 31 L221 22 L233 31 Z" fill="#2aa0e8" opacity=".9"/><path d="M233 16 V31 L221 22 Z" fill="#40c0f0"/>
<defs><linearGradient id="ffg" x1="0.8" y1="0" x2="0.3" y2="1"><stop offset="0" stop-color="#ffe03a"/><stop offset=".35" stop-color="#ff8a1a"/><stop offset=".7" stop-color="#ff3a4a"/><stop offset="1" stop-color="#e8157a"/></linearGradient>
<radialGradient id="ffp" cx=".5" cy=".4" r=".6"><stop offset="0" stop-color="#b84ae8"/><stop offset="1" stop-color="#6a2ad8"/></radialGradient></defs>
<path d="M265 9 Q261 12 259.5 17 Q258.5 25 264 29.5 Q270 33 276 30.5 Q282 27 282 19 Q282 14 279 10 Q277 7.5 273.5 6.5 Q276 10 275.5 13 Q273 10 269 10 Q266 9.5 265 9 Z" fill="url(#ffg)"/>
<circle cx="270.5" cy="19" r="5.2" fill="url(#ffp)"/>
<path d="M264 15 Q267 13 271 14 Q268 15 267 17 Q265 16 264 15 Z" fill="#ff9a2a"/>
<path d="M263 10.5 Q264 12 262.5 14" stroke="#ff7a1a" stroke-width="1.5" fill="none"/>
<path d="M319 19 L309.2 13.35 A11.3 11.3 0 0 1 328.8 13.35 Z" fill="#db4437"/><path d="M319 19 L328.8 13.35 A11.3 11.3 0 0 1 319 30.3 Z" fill="#fcc934"/><path d="M319 19 L319 30.3 A11.3 11.3 0 0 1 309.2 13.35 Z" fill="#1e9e4a"/><circle cx="319" cy="19" r="5.2" fill="#fff"/><circle cx="319" cy="19" r="4.2" fill="#4a8af4"/>
</svg>
<svg class="abs" style="left:1500px;top:897px" width="171" height="39" viewBox="0 0 171 39">
<path d="M8 22.5 L14 16.5 L20 22.5" stroke="#fff" stroke-width="1.1" fill="none"/>
<g stroke="#fff" stroke-width="1" fill="none"><path d="M33.5 15.5 H46.5 V23.5 H33.5"/><path d="M30.5 14.5 H34.5 V18.5 H30.5 Z"/><path d="M32.5 18.5 V26.5 M40.5 23.5 V26.5 M32 26.5 H43"/></g>
<path d="M54.5 17.5 H57 L60.5 14 V25 L57 21.5 H54.5 Z" stroke="#fff" stroke-width="1" fill="none"/><path d="M62.8 17.5 Q64 19.5 62.8 21.5 M65 15.8 Q67.3 19.5 65 23.2 M67.4 14 Q70.6 19.5 67.4 25" stroke="#fff" stroke-width="1" fill="none"/>
<path d="M156 17 H171 V28 H162 L158 31 V28 H156 Z" fill="#fff"/><path d="M159 20.5 H169 M159 23.5 H169" stroke="#101010" stroke-width="1"/>
</svg>
<div class="abs" style="left:1578px;top:899px;width:62px;text-align:center;color:#fff;font-size:11.5px;line-height:17.5px">21:56<br>09/07/2021</div>
<div class="abs" style="left:0;top:897px;width:169px;height:39px;background:#f0f0f0;border-top:1px solid #b4b4b4"></div>
<div class="abs" style="left:0;top:908px;font-size:15px;line-height:18px;color:#222">quisar</div>
</body></html>
